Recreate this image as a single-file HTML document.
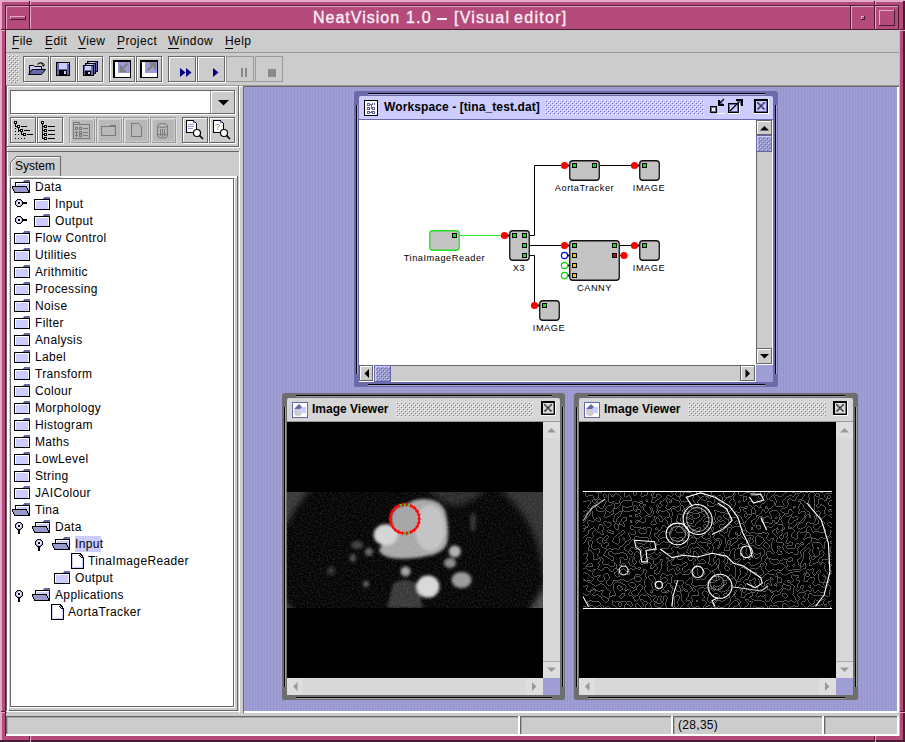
<!DOCTYPE html>
<html><head><meta charset="utf-8"><style>
html,body{margin:0;padding:0;}
body{width:905px;height:742px;overflow:hidden;position:relative;font-family:"Liberation Sans",sans-serif;}
body>div{position:absolute;}
.cr{filter:url(#crisp);}
</style></head><body>
<svg width="0" height="0" style="position:absolute"><filter id="crisp" x="-5%" y="-5%" width="110%" height="110%"><feComponentTransfer><feFuncA type="discrete" tableValues="0 0 0 1 1"/></feComponentTransfer></filter></svg>
<div style="left:0px;top:0px;width:905px;height:742px;background:#b44b7b;"></div>
<div style="left:0px;top:0px;width:905px;height:2px;background:#e2a9c9;"></div>
<div style="left:0px;top:0px;width:2px;height:742px;background:#e2a9c9;"></div>
<div style="left:903px;top:1px;width:2px;height:741px;background:#4b1b33;"></div>
<div style="left:0px;top:740px;width:905px;height:2px;background:#4b1b33;"></div>
<div style="left:5px;top:5px;width:894px;height:1px;background:#4b1b33;"></div>
<div style="left:5px;top:5px;width:1px;height:731px;background:#4b1b33;"></div>
<div style="left:899px;top:30px;width:1px;height:706px;background:#e2a9c9;"></div>
<div style="left:6px;top:735px;width:894px;height:1px;background:#e2a9c9;"></div>
<div style="left:6px;top:6px;width:893px;height:24px;background:#b44b7b;"></div>
<div style="left:6px;top:6px;width:24px;height:1px;background:#e2a9c9;"></div>
<div style="left:6px;top:6px;width:1px;height:24px;background:#e2a9c9;"></div>
<div style="left:6px;top:29px;width:24px;height:1px;background:#4b1b33;"></div>
<div style="left:29px;top:6px;width:1px;height:24px;background:#4b1b33;"></div>
<div style="left:30px;top:6px;width:821px;height:1px;background:#e2a9c9;"></div>
<div style="left:30px;top:6px;width:1px;height:24px;background:#e2a9c9;"></div>
<div style="left:30px;top:29px;width:821px;height:1px;background:#4b1b33;"></div>
<div style="left:850px;top:6px;width:1px;height:24px;background:#4b1b33;"></div>
<div style="left:851px;top:6px;width:24px;height:1px;background:#e2a9c9;"></div>
<div style="left:851px;top:6px;width:1px;height:24px;background:#e2a9c9;"></div>
<div style="left:851px;top:29px;width:24px;height:1px;background:#4b1b33;"></div>
<div style="left:874px;top:6px;width:1px;height:24px;background:#4b1b33;"></div>
<div style="left:875px;top:6px;width:24px;height:1px;background:#e2a9c9;"></div>
<div style="left:875px;top:6px;width:1px;height:24px;background:#e2a9c9;"></div>
<div style="left:875px;top:29px;width:24px;height:1px;background:#4b1b33;"></div>
<div style="left:898px;top:6px;width:1px;height:24px;background:#4b1b33;"></div>
<div style="left:10px;top:16px;width:16px;height:1px;background:#e2a9c9;"></div>
<div style="left:10px;top:16px;width:1px;height:4px;background:#e2a9c9;"></div>
<div style="left:10px;top:19px;width:16px;height:1px;background:#4b1b33;"></div>
<div style="left:25px;top:16px;width:1px;height:4px;background:#4b1b33;"></div>
<div style="left:861px;top:16px;width:4px;height:1px;background:#e2a9c9;"></div>
<div style="left:861px;top:16px;width:1px;height:4px;background:#e2a9c9;"></div>
<div style="left:861px;top:19px;width:4px;height:1px;background:#4b1b33;"></div>
<div style="left:864px;top:16px;width:1px;height:4px;background:#4b1b33;"></div>
<div style="left:879px;top:10px;width:16px;height:1px;background:#e2a9c9;"></div>
<div style="left:879px;top:10px;width:1px;height:16px;background:#e2a9c9;"></div>
<div style="left:879px;top:25px;width:16px;height:1px;background:#4b1b33;"></div>
<div style="left:894px;top:10px;width:1px;height:16px;background:#4b1b33;"></div>
<div style="left:29px;top:1px;width:1px;height:4px;background:#4b1b33;"></div>
<div style="left:30px;top:1px;width:1px;height:4px;background:#e2a9c9;"></div>
<div style="left:1px;top:29px;width:4px;height:1px;background:#4b1b33;"></div>
<div style="left:1px;top:30px;width:4px;height:1px;background:#e2a9c9;"></div>
<div style="left:874px;top:1px;width:1px;height:4px;background:#4b1b33;"></div>
<div style="left:875px;top:1px;width:1px;height:4px;background:#e2a9c9;"></div>
<div style="left:900px;top:29px;width:5px;height:1px;background:#4b1b33;"></div>
<div style="left:900px;top:30px;width:5px;height:1px;background:#e2a9c9;"></div>
<div style="left:1px;top:711px;width:4px;height:1px;background:#4b1b33;"></div>
<div style="left:1px;top:712px;width:4px;height:1px;background:#e2a9c9;"></div>
<div style="left:900px;top:711px;width:5px;height:1px;background:#4b1b33;"></div>
<div style="left:900px;top:712px;width:5px;height:1px;background:#e2a9c9;"></div>
<div style="left:29px;top:736px;width:1px;height:6px;background:#4b1b33;"></div>
<div style="left:30px;top:736px;width:1px;height:6px;background:#e2a9c9;"></div>
<div style="left:874px;top:736px;width:1px;height:6px;background:#4b1b33;"></div>
<div style="left:875px;top:736px;width:1px;height:6px;background:#e2a9c9;"></div>
<div class="" style="left:313px;top:9.96px;font-size:16px;line-height:16px;font-weight:normal;color:#faf0f5;white-space:pre;letter-spacing:1.0px;-webkit-text-stroke:0.35px #faf0f5">NeatVision</div>
<div class="" style="left:406px;top:9.96px;font-size:16px;line-height:16px;font-weight:normal;color:#faf0f5;white-space:pre;letter-spacing:1.2px;-webkit-text-stroke:0.35px #faf0f5">1.0</div>
<div class="" style="left:454px;top:9.96px;font-size:16px;line-height:16px;font-weight:normal;color:#faf0f5;white-space:pre;letter-spacing:1.2px;-webkit-text-stroke:0.35px #faf0f5">[Visual</div>
<div class="" style="left:514px;top:9.96px;font-size:16px;line-height:16px;font-weight:normal;color:#faf0f5;white-space:pre;letter-spacing:1.3px;-webkit-text-stroke:0.35px #faf0f5">editor]</div>
<div style="left:437px;top:18px;width:10px;height:2px;background:#faf0f5;"></div>
<div style="left:6px;top:30px;width:893px;height:705px;background:#cccccc;"></div>
<div style="left:6px;top:52px;width:893px;height:1px;background:#999999;"></div>
<div class="" style="left:12px;top:34.84px;font-size:12px;line-height:12px;font-weight:normal;color:#000;white-space:pre;letter-spacing:0.4px">File</div>
<div style="left:12px;top:48px;width:7px;height:1px;background:#000;"></div>
<div class="" style="left:45px;top:34.84px;font-size:12px;line-height:12px;font-weight:normal;color:#000;white-space:pre;letter-spacing:0.4px">Edit</div>
<div style="left:45px;top:48px;width:7px;height:1px;background:#000;"></div>
<div class="" style="left:78px;top:34.84px;font-size:12px;line-height:12px;font-weight:normal;color:#000;white-space:pre;letter-spacing:0.4px">View</div>
<div style="left:78px;top:48px;width:8px;height:1px;background:#000;"></div>
<div class="" style="left:117px;top:34.84px;font-size:12px;line-height:12px;font-weight:normal;color:#000;white-space:pre;letter-spacing:0.4px">Project</div>
<div style="left:117px;top:48px;width:7px;height:1px;background:#000;"></div>
<div class="" style="left:168px;top:34.84px;font-size:12px;line-height:12px;font-weight:normal;color:#000;white-space:pre;letter-spacing:0.4px">Window</div>
<div style="left:168px;top:48px;width:11px;height:1px;background:#000;"></div>
<div class="" style="left:225px;top:34.84px;font-size:12px;line-height:12px;font-weight:normal;color:#000;white-space:pre;letter-spacing:0.4px">Help</div>
<div style="left:225px;top:48px;width:8px;height:1px;background:#000;"></div>
<svg style="position:absolute;left:8px;top:55px" width="11" height="28" shape-rendering="crispEdges"><defs><pattern id="gp" width="4" height="4" patternUnits="userSpaceOnUse"><rect x="0" y="0" width="1" height="1" fill="#fff"/><rect x="2" y="2" width="1" height="1" fill="#fff"/><rect x="1" y="1" width="1" height="1" fill="#777"/><rect x="3" y="3" width="1" height="1" fill="#777"/></pattern></defs><rect width="11" height="28" fill="url(#gp)"/></svg>
<div style="left:23px;top:56px;width:26px;height:1px;background:#666666;"></div>
<div style="left:23px;top:56px;width:1px;height:26px;background:#666666;"></div>
<div style="left:23px;top:81px;width:26px;height:1px;background:#666666;"></div>
<div style="left:48px;top:56px;width:1px;height:26px;background:#666666;"></div>
<div style="left:24px;top:57px;width:26px;height:1px;background:#ffffff;"></div>
<div style="left:24px;top:57px;width:1px;height:26px;background:#ffffff;"></div>
<div style="left:24px;top:82px;width:26px;height:1px;background:#ffffff;"></div>
<div style="left:49px;top:57px;width:1px;height:26px;background:#ffffff;"></div>
<div style="left:23px;top:56px;width:26px;height:1px;background:#666666;"></div>
<div style="left:23px;top:56px;width:1px;height:26px;background:#666666;"></div>
<div style="left:24px;top:81px;width:25px;height:1px;background:#666666;"></div>
<div style="left:48px;top:57px;width:1px;height:25px;background:#666666;"></div>
<div style="left:50px;top:56px;width:26px;height:1px;background:#666666;"></div>
<div style="left:50px;top:56px;width:1px;height:26px;background:#666666;"></div>
<div style="left:50px;top:81px;width:26px;height:1px;background:#666666;"></div>
<div style="left:75px;top:56px;width:1px;height:26px;background:#666666;"></div>
<div style="left:51px;top:57px;width:26px;height:1px;background:#ffffff;"></div>
<div style="left:51px;top:57px;width:1px;height:26px;background:#ffffff;"></div>
<div style="left:51px;top:82px;width:26px;height:1px;background:#ffffff;"></div>
<div style="left:76px;top:57px;width:1px;height:26px;background:#ffffff;"></div>
<div style="left:50px;top:56px;width:26px;height:1px;background:#666666;"></div>
<div style="left:50px;top:56px;width:1px;height:26px;background:#666666;"></div>
<div style="left:51px;top:81px;width:25px;height:1px;background:#666666;"></div>
<div style="left:75px;top:57px;width:1px;height:25px;background:#666666;"></div>
<div style="left:77px;top:56px;width:26px;height:1px;background:#666666;"></div>
<div style="left:77px;top:56px;width:1px;height:26px;background:#666666;"></div>
<div style="left:77px;top:81px;width:26px;height:1px;background:#666666;"></div>
<div style="left:102px;top:56px;width:1px;height:26px;background:#666666;"></div>
<div style="left:78px;top:57px;width:26px;height:1px;background:#ffffff;"></div>
<div style="left:78px;top:57px;width:1px;height:26px;background:#ffffff;"></div>
<div style="left:78px;top:82px;width:26px;height:1px;background:#ffffff;"></div>
<div style="left:103px;top:57px;width:1px;height:26px;background:#ffffff;"></div>
<div style="left:77px;top:56px;width:26px;height:1px;background:#666666;"></div>
<div style="left:77px;top:56px;width:1px;height:26px;background:#666666;"></div>
<div style="left:78px;top:81px;width:25px;height:1px;background:#666666;"></div>
<div style="left:102px;top:57px;width:1px;height:25px;background:#666666;"></div>
<div style="left:109px;top:56px;width:26px;height:1px;background:#666666;"></div>
<div style="left:109px;top:56px;width:1px;height:26px;background:#666666;"></div>
<div style="left:109px;top:81px;width:26px;height:1px;background:#666666;"></div>
<div style="left:134px;top:56px;width:1px;height:26px;background:#666666;"></div>
<div style="left:110px;top:57px;width:26px;height:1px;background:#ffffff;"></div>
<div style="left:110px;top:57px;width:1px;height:26px;background:#ffffff;"></div>
<div style="left:110px;top:82px;width:26px;height:1px;background:#ffffff;"></div>
<div style="left:135px;top:57px;width:1px;height:26px;background:#ffffff;"></div>
<div style="left:109px;top:56px;width:26px;height:1px;background:#666666;"></div>
<div style="left:109px;top:56px;width:1px;height:26px;background:#666666;"></div>
<div style="left:110px;top:81px;width:25px;height:1px;background:#666666;"></div>
<div style="left:134px;top:57px;width:1px;height:25px;background:#666666;"></div>
<div style="left:136px;top:56px;width:26px;height:1px;background:#666666;"></div>
<div style="left:136px;top:56px;width:1px;height:26px;background:#666666;"></div>
<div style="left:136px;top:81px;width:26px;height:1px;background:#666666;"></div>
<div style="left:161px;top:56px;width:1px;height:26px;background:#666666;"></div>
<div style="left:137px;top:57px;width:26px;height:1px;background:#ffffff;"></div>
<div style="left:137px;top:57px;width:1px;height:26px;background:#ffffff;"></div>
<div style="left:137px;top:82px;width:26px;height:1px;background:#ffffff;"></div>
<div style="left:162px;top:57px;width:1px;height:26px;background:#ffffff;"></div>
<div style="left:136px;top:56px;width:26px;height:1px;background:#666666;"></div>
<div style="left:136px;top:56px;width:1px;height:26px;background:#666666;"></div>
<div style="left:137px;top:81px;width:25px;height:1px;background:#666666;"></div>
<div style="left:161px;top:57px;width:1px;height:25px;background:#666666;"></div>
<div style="left:168px;top:56px;width:28px;height:1px;background:#666666;"></div>
<div style="left:168px;top:56px;width:1px;height:26px;background:#666666;"></div>
<div style="left:168px;top:81px;width:28px;height:1px;background:#666666;"></div>
<div style="left:195px;top:56px;width:1px;height:26px;background:#666666;"></div>
<div style="left:169px;top:57px;width:28px;height:1px;background:#ffffff;"></div>
<div style="left:169px;top:57px;width:1px;height:26px;background:#ffffff;"></div>
<div style="left:169px;top:82px;width:28px;height:1px;background:#ffffff;"></div>
<div style="left:196px;top:57px;width:1px;height:26px;background:#ffffff;"></div>
<div style="left:168px;top:56px;width:28px;height:1px;background:#666666;"></div>
<div style="left:168px;top:56px;width:1px;height:26px;background:#666666;"></div>
<div style="left:169px;top:81px;width:27px;height:1px;background:#666666;"></div>
<div style="left:195px;top:57px;width:1px;height:25px;background:#666666;"></div>
<div style="left:197px;top:56px;width:28px;height:1px;background:#666666;"></div>
<div style="left:197px;top:56px;width:1px;height:26px;background:#666666;"></div>
<div style="left:197px;top:81px;width:28px;height:1px;background:#666666;"></div>
<div style="left:224px;top:56px;width:1px;height:26px;background:#666666;"></div>
<div style="left:198px;top:57px;width:28px;height:1px;background:#ffffff;"></div>
<div style="left:198px;top:57px;width:1px;height:26px;background:#ffffff;"></div>
<div style="left:198px;top:82px;width:28px;height:1px;background:#ffffff;"></div>
<div style="left:225px;top:57px;width:1px;height:26px;background:#ffffff;"></div>
<div style="left:197px;top:56px;width:28px;height:1px;background:#666666;"></div>
<div style="left:197px;top:56px;width:1px;height:26px;background:#666666;"></div>
<div style="left:198px;top:81px;width:27px;height:1px;background:#666666;"></div>
<div style="left:224px;top:57px;width:1px;height:25px;background:#666666;"></div>
<div style="left:226px;top:56px;width:28px;height:1px;background:#999999;"></div>
<div style="left:226px;top:56px;width:1px;height:26px;background:#999999;"></div>
<div style="left:226px;top:81px;width:28px;height:1px;background:#999999;"></div>
<div style="left:253px;top:56px;width:1px;height:26px;background:#999999;"></div>
<div style="left:255px;top:56px;width:28px;height:1px;background:#999999;"></div>
<div style="left:255px;top:56px;width:1px;height:26px;background:#999999;"></div>
<div style="left:255px;top:81px;width:28px;height:1px;background:#999999;"></div>
<div style="left:282px;top:56px;width:1px;height:26px;background:#999999;"></div>
<div style="left:6px;top:85px;width:893px;height:1px;background:#999999;"></div>
<div style="left:6px;top:86px;width:893px;height:1px;background:#ffffff;"></div>
<div style="left:6px;top:86px;width:1px;height:627px;background:#666666;"></div>
<div style="left:7px;top:87px;width:1px;height:625px;background:#ffffff;"></div>
<div style="left:10px;top:90px;width:225px;height:1px;background:#666666;"></div>
<div style="left:10px;top:90px;width:1px;height:24px;background:#666666;"></div>
<div style="left:10px;top:113px;width:225px;height:1px;background:#666666;"></div>
<div style="left:234px;top:90px;width:1px;height:24px;background:#666666;"></div>
<div style="left:11px;top:114px;width:225px;height:1px;background:#ffffff;"></div>
<div style="left:235px;top:91px;width:1px;height:24px;background:#ffffff;"></div>
<div style="left:11px;top:91px;width:199px;height:22px;background:#ffffff;"></div>
<div style="left:210px;top:91px;width:1px;height:22px;background:#999999;"></div>
<div style="left:211px;top:91px;width:23px;height:1px;background:#ffffff;"></div>
<div style="left:211px;top:91px;width:1px;height:22px;background:#ffffff;"></div>
<svg style="position:absolute;left:218px;top:100px" width="11" height="6"><path d="M0 0H11L5.5 5.5Z" fill="#000"/></svg>
<div style="left:11px;top:118px;width:26px;height:1px;background:#ffffff;"></div>
<div style="left:11px;top:118px;width:1px;height:26px;background:#ffffff;"></div>
<div style="left:11px;top:143px;width:26px;height:1px;background:#ffffff;"></div>
<div style="left:36px;top:118px;width:1px;height:26px;background:#ffffff;"></div>
<div style="left:10px;top:117px;width:26px;height:1px;background:#666666;"></div>
<div style="left:10px;top:117px;width:1px;height:26px;background:#666666;"></div>
<div style="left:10px;top:142px;width:26px;height:1px;background:#666666;"></div>
<div style="left:35px;top:117px;width:1px;height:26px;background:#666666;"></div>
<div style="left:38px;top:118px;width:26px;height:1px;background:#ffffff;"></div>
<div style="left:38px;top:118px;width:1px;height:26px;background:#ffffff;"></div>
<div style="left:38px;top:143px;width:26px;height:1px;background:#ffffff;"></div>
<div style="left:63px;top:118px;width:1px;height:26px;background:#ffffff;"></div>
<div style="left:37px;top:117px;width:26px;height:1px;background:#666666;"></div>
<div style="left:37px;top:117px;width:1px;height:26px;background:#666666;"></div>
<div style="left:37px;top:142px;width:26px;height:1px;background:#666666;"></div>
<div style="left:62px;top:117px;width:1px;height:26px;background:#666666;"></div>
<div style="left:183px;top:118px;width:26px;height:1px;background:#ffffff;"></div>
<div style="left:183px;top:118px;width:1px;height:26px;background:#ffffff;"></div>
<div style="left:183px;top:143px;width:26px;height:1px;background:#ffffff;"></div>
<div style="left:208px;top:118px;width:1px;height:26px;background:#ffffff;"></div>
<div style="left:182px;top:117px;width:26px;height:1px;background:#666666;"></div>
<div style="left:182px;top:117px;width:1px;height:26px;background:#666666;"></div>
<div style="left:182px;top:142px;width:26px;height:1px;background:#666666;"></div>
<div style="left:207px;top:117px;width:1px;height:26px;background:#666666;"></div>
<div style="left:210px;top:118px;width:26px;height:1px;background:#ffffff;"></div>
<div style="left:210px;top:118px;width:1px;height:26px;background:#ffffff;"></div>
<div style="left:210px;top:143px;width:26px;height:1px;background:#ffffff;"></div>
<div style="left:235px;top:118px;width:1px;height:26px;background:#ffffff;"></div>
<div style="left:209px;top:117px;width:26px;height:1px;background:#666666;"></div>
<div style="left:209px;top:117px;width:1px;height:26px;background:#666666;"></div>
<div style="left:209px;top:142px;width:26px;height:1px;background:#666666;"></div>
<div style="left:234px;top:117px;width:1px;height:26px;background:#666666;"></div>
<div style="left:69px;top:117px;width:26px;height:1px;background:#999999;"></div>
<div style="left:69px;top:117px;width:1px;height:26px;background:#999999;"></div>
<div style="left:69px;top:142px;width:26px;height:1px;background:#999999;"></div>
<div style="left:94px;top:117px;width:1px;height:26px;background:#999999;"></div>
<div style="left:70px;top:118px;width:26px;height:1px;background:#e0e0e0;"></div>
<div style="left:70px;top:118px;width:1px;height:26px;background:#e0e0e0;"></div>
<div style="left:70px;top:143px;width:26px;height:1px;background:#e0e0e0;"></div>
<div style="left:95px;top:118px;width:1px;height:26px;background:#e0e0e0;"></div>
<div style="left:72px;top:120px;width:21px;height:21px;background:#b8b8b8;"></div>
<div style="left:96px;top:117px;width:26px;height:1px;background:#999999;"></div>
<div style="left:96px;top:117px;width:1px;height:26px;background:#999999;"></div>
<div style="left:96px;top:142px;width:26px;height:1px;background:#999999;"></div>
<div style="left:121px;top:117px;width:1px;height:26px;background:#999999;"></div>
<div style="left:97px;top:118px;width:26px;height:1px;background:#e0e0e0;"></div>
<div style="left:97px;top:118px;width:1px;height:26px;background:#e0e0e0;"></div>
<div style="left:97px;top:143px;width:26px;height:1px;background:#e0e0e0;"></div>
<div style="left:122px;top:118px;width:1px;height:26px;background:#e0e0e0;"></div>
<div style="left:99px;top:120px;width:21px;height:21px;background:#b8b8b8;"></div>
<div style="left:123px;top:117px;width:26px;height:1px;background:#999999;"></div>
<div style="left:123px;top:117px;width:1px;height:26px;background:#999999;"></div>
<div style="left:123px;top:142px;width:26px;height:1px;background:#999999;"></div>
<div style="left:148px;top:117px;width:1px;height:26px;background:#999999;"></div>
<div style="left:124px;top:118px;width:26px;height:1px;background:#e0e0e0;"></div>
<div style="left:124px;top:118px;width:1px;height:26px;background:#e0e0e0;"></div>
<div style="left:124px;top:143px;width:26px;height:1px;background:#e0e0e0;"></div>
<div style="left:149px;top:118px;width:1px;height:26px;background:#e0e0e0;"></div>
<div style="left:126px;top:120px;width:21px;height:21px;background:#b8b8b8;"></div>
<div style="left:150px;top:117px;width:26px;height:1px;background:#999999;"></div>
<div style="left:150px;top:117px;width:1px;height:26px;background:#999999;"></div>
<div style="left:150px;top:142px;width:26px;height:1px;background:#999999;"></div>
<div style="left:175px;top:117px;width:1px;height:26px;background:#999999;"></div>
<div style="left:151px;top:118px;width:26px;height:1px;background:#e0e0e0;"></div>
<div style="left:151px;top:118px;width:1px;height:26px;background:#e0e0e0;"></div>
<div style="left:151px;top:143px;width:26px;height:1px;background:#e0e0e0;"></div>
<div style="left:176px;top:118px;width:1px;height:26px;background:#e0e0e0;"></div>
<div style="left:153px;top:120px;width:21px;height:21px;background:#b8b8b8;"></div>
<div style="left:6px;top:146px;width:233px;height:1px;background:#666666;"></div>
<div style="left:7px;top:147px;width:233px;height:1px;background:#ffffff;"></div>
<div style="left:238px;top:86px;width:1px;height:61px;background:#666666;"></div>
<div style="left:239px;top:87px;width:1px;height:61px;background:#ffffff;"></div>
<div style="left:6px;top:151px;width:234px;height:1px;background:#666666;"></div>
<div style="left:239px;top:151px;width:1px;height:562px;background:#ffffff;"></div>
<div style="left:6px;top:711px;width:234px;height:1px;background:#ffffff;"></div>
<svg style="position:absolute;left:9px;top:155px" width="53" height="23"><path d="M1.5 22V7.5L7.5 1.5H51.5V22" fill="#cccccc" stroke="#666" stroke-width="1"/><path d="M2.5 22V8L8 2.5H50.5" fill="none" stroke="#fff" stroke-width="1"/></svg>
<div class="" style="left:15px;top:159.84px;font-size:12px;line-height:12px;font-weight:normal;color:#000;white-space:pre;">System</div>
<div style="left:9px;top:176px;width:228px;height:1px;background:#ffffff;"></div>
<div style="left:61px;top:177px;width:176px;height:1px;background:#ffffff;"></div>
<div style="left:237px;top:176px;width:1px;height:535px;background:#666666;"></div>
<div style="left:9px;top:710px;width:229px;height:1px;background:#666666;"></div>
<div style="left:8px;top:176px;width:1px;height:534px;background:#ffffff;"></div>
<div style="left:10px;top:178px;width:224px;height:1px;background:#666666;"></div>
<div style="left:10px;top:178px;width:1px;height:529px;background:#666666;"></div>
<div style="left:10px;top:706px;width:224px;height:1px;background:#666666;"></div>
<div style="left:233px;top:178px;width:1px;height:529px;background:#666666;"></div>
<div style="left:234px;top:178px;width:1px;height:530px;background:#ffffff;"></div>
<div style="left:10px;top:707px;width:225px;height:1px;background:#ffffff;"></div>
<div style="left:11px;top:179px;width:222px;height:527px;background:#ffffff;"></div>
<svg style="position:absolute;left:12px;top:180px" width="18" height="13" shape-rendering="crispEdges"><rect x="12" y="0" width="6" height="1" fill="#6666aa"/><rect x="11" y="1" width="7" height="1" fill="#6666aa"/><rect x="3" y="2" width="15" height="1" fill="#000000"/><rect x="3" y="3" width="1" height="1" fill="#000000"/><rect x="4" y="3" width="13" height="1" fill="#ffffff"/><rect x="17" y="3" width="1" height="1" fill="#000000"/><rect x="3" y="4" width="1" height="1" fill="#000000"/><rect x="4" y="4" width="1" height="1" fill="#ffffff"/><rect x="5" y="4" width="12" height="1" fill="#ccccff"/><rect x="17" y="4" width="1" height="1" fill="#000000"/><rect x="3" y="5" width="1" height="1" fill="#000000"/><rect x="4" y="5" width="1" height="1" fill="#ffffff"/><rect x="5" y="5" width="12" height="1" fill="#ccccff"/><rect x="17" y="5" width="1" height="1" fill="#000000"/><rect x="0" y="6" width="15" height="1" fill="#000000"/><rect x="15" y="6" width="2" height="1" fill="#ccccff"/><rect x="17" y="6" width="1" height="1" fill="#000000"/><rect x="0" y="7" width="1" height="1" fill="#000000"/><rect x="1" y="7" width="13" height="1" fill="#9999cc"/><rect x="14" y="7" width="1" height="1" fill="#000000"/><rect x="15" y="7" width="2" height="1" fill="#ccccff"/><rect x="17" y="7" width="1" height="1" fill="#000000"/><rect x="0" y="8" width="1" height="1" fill="#000000"/><rect x="1" y="8" width="14" height="1" fill="#9999cc"/><rect x="15" y="8" width="1" height="1" fill="#000000"/><rect x="16" y="8" width="1" height="1" fill="#ccccff"/><rect x="17" y="8" width="1" height="1" fill="#000000"/><rect x="1" y="9" width="1" height="1" fill="#000000"/><rect x="2" y="9" width="13" height="1" fill="#9999cc"/><rect x="15" y="9" width="1" height="1" fill="#000000"/><rect x="16" y="9" width="1" height="1" fill="#ccccff"/><rect x="17" y="9" width="1" height="1" fill="#000000"/><rect x="1" y="10" width="1" height="1" fill="#000000"/><rect x="2" y="10" width="14" height="1" fill="#9999cc"/><rect x="16" y="10" width="2" height="1" fill="#000000"/><rect x="2" y="11" width="1" height="1" fill="#000000"/><rect x="3" y="11" width="13" height="1" fill="#9999cc"/><rect x="16" y="11" width="2" height="1" fill="#000000"/><rect x="2" y="12" width="16" height="1" fill="#000000"/></svg>
<div class="" style="left:35px;top:180.84px;font-size:12px;line-height:12px;font-weight:normal;color:#000;white-space:pre;letter-spacing:0.35px">Data</div>
<svg style="position:absolute;left:34px;top:197px" width="16" height="13" shape-rendering="crispEdges"><rect x="10" y="0" width="6" height="1" fill="#6666aa"/><rect x="9" y="1" width="7" height="1" fill="#6666aa"/><rect x="0" y="2" width="16" height="1" fill="#000000"/><rect x="0" y="3" width="1" height="1" fill="#000000"/><rect x="1" y="3" width="14" height="1" fill="#ffffff"/><rect x="15" y="3" width="1" height="1" fill="#000000"/><rect x="0" y="4" width="1" height="1" fill="#000000"/><rect x="1" y="4" width="1" height="1" fill="#ffffff"/><rect x="2" y="4" width="12" height="1" fill="#ccccff"/><rect x="14" y="4" width="1" height="1" fill="#ffffff"/><rect x="15" y="4" width="1" height="1" fill="#000000"/><rect x="0" y="5" width="1" height="1" fill="#000000"/><rect x="1" y="5" width="1" height="1" fill="#ffffff"/><rect x="2" y="5" width="12" height="1" fill="#ccccff"/><rect x="14" y="5" width="1" height="1" fill="#ffffff"/><rect x="15" y="5" width="1" height="1" fill="#000000"/><rect x="0" y="6" width="1" height="1" fill="#000000"/><rect x="1" y="6" width="1" height="1" fill="#ffffff"/><rect x="2" y="6" width="12" height="1" fill="#ccccff"/><rect x="14" y="6" width="1" height="1" fill="#ffffff"/><rect x="15" y="6" width="1" height="1" fill="#000000"/><rect x="0" y="7" width="1" height="1" fill="#000000"/><rect x="1" y="7" width="1" height="1" fill="#ffffff"/><rect x="2" y="7" width="12" height="1" fill="#ccccff"/><rect x="14" y="7" width="1" height="1" fill="#ffffff"/><rect x="15" y="7" width="1" height="1" fill="#000000"/><rect x="0" y="8" width="1" height="1" fill="#000000"/><rect x="1" y="8" width="1" height="1" fill="#ffffff"/><rect x="2" y="8" width="12" height="1" fill="#ccccff"/><rect x="14" y="8" width="1" height="1" fill="#ffffff"/><rect x="15" y="8" width="1" height="1" fill="#000000"/><rect x="0" y="9" width="1" height="1" fill="#000000"/><rect x="1" y="9" width="1" height="1" fill="#ffffff"/><rect x="2" y="9" width="12" height="1" fill="#ccccff"/><rect x="14" y="9" width="1" height="1" fill="#ffffff"/><rect x="15" y="9" width="1" height="1" fill="#000000"/><rect x="0" y="10" width="1" height="1" fill="#000000"/><rect x="1" y="10" width="1" height="1" fill="#ffffff"/><rect x="2" y="10" width="12" height="1" fill="#ccccff"/><rect x="14" y="10" width="1" height="1" fill="#ffffff"/><rect x="15" y="10" width="1" height="1" fill="#000000"/><rect x="0" y="11" width="1" height="1" fill="#000000"/><rect x="1" y="11" width="1" height="1" fill="#ffffff"/><rect x="2" y="11" width="12" height="1" fill="#ccccff"/><rect x="14" y="11" width="1" height="1" fill="#ffffff"/><rect x="15" y="11" width="1" height="1" fill="#000000"/><rect x="0" y="12" width="16" height="1" fill="#000000"/></svg>
<svg style="position:absolute;left:15px;top:199px" width="12" height="8" shape-rendering="crispEdges"><rect x="2" y="0" width="4" height="1" fill="#000000"/><rect x="1" y="1" width="1" height="1" fill="#000000"/><rect x="2" y="1" width="1" height="1" fill="#9999cc"/><rect x="3" y="1" width="2" height="1" fill="#ccccff"/><rect x="5" y="1" width="1" height="1" fill="#9999cc"/><rect x="6" y="1" width="1" height="1" fill="#000000"/><rect x="0" y="2" width="1" height="1" fill="#000000"/><rect x="1" y="2" width="1" height="1" fill="#9999cc"/><rect x="2" y="2" width="1" height="1" fill="#ccccff"/><rect x="3" y="2" width="2" height="1" fill="#ffffff"/><rect x="5" y="2" width="1" height="1" fill="#ccccff"/><rect x="6" y="2" width="1" height="1" fill="#9999cc"/><rect x="7" y="2" width="1" height="1" fill="#000000"/><rect x="0" y="3" width="1" height="1" fill="#000000"/><rect x="1" y="3" width="1" height="1" fill="#ccccff"/><rect x="2" y="3" width="1" height="1" fill="#ffffff"/><rect x="3" y="3" width="2" height="1" fill="#000000"/><rect x="5" y="3" width="1" height="1" fill="#ffffff"/><rect x="6" y="3" width="1" height="1" fill="#ccccff"/><rect x="7" y="3" width="5" height="1" fill="#000000"/><rect x="0" y="4" width="1" height="1" fill="#000000"/><rect x="1" y="4" width="1" height="1" fill="#ccccff"/><rect x="2" y="4" width="1" height="1" fill="#ffffff"/><rect x="3" y="4" width="2" height="1" fill="#000000"/><rect x="5" y="4" width="1" height="1" fill="#ffffff"/><rect x="6" y="4" width="1" height="1" fill="#ccccff"/><rect x="7" y="4" width="5" height="1" fill="#000000"/><rect x="0" y="5" width="1" height="1" fill="#000000"/><rect x="1" y="5" width="1" height="1" fill="#9999cc"/><rect x="2" y="5" width="1" height="1" fill="#ccccff"/><rect x="3" y="5" width="2" height="1" fill="#ffffff"/><rect x="5" y="5" width="1" height="1" fill="#ccccff"/><rect x="6" y="5" width="1" height="1" fill="#9999cc"/><rect x="7" y="5" width="1" height="1" fill="#000000"/><rect x="1" y="6" width="1" height="1" fill="#000000"/><rect x="2" y="6" width="1" height="1" fill="#9999cc"/><rect x="3" y="6" width="2" height="1" fill="#ccccff"/><rect x="5" y="6" width="1" height="1" fill="#9999cc"/><rect x="6" y="6" width="1" height="1" fill="#000000"/><rect x="2" y="7" width="4" height="1" fill="#000000"/></svg>
<div class="" style="left:55px;top:197.84px;font-size:12px;line-height:12px;font-weight:normal;color:#000;white-space:pre;letter-spacing:0.35px">Input</div>
<svg style="position:absolute;left:34px;top:214px" width="16" height="13" shape-rendering="crispEdges"><rect x="10" y="0" width="6" height="1" fill="#6666aa"/><rect x="9" y="1" width="7" height="1" fill="#6666aa"/><rect x="0" y="2" width="16" height="1" fill="#000000"/><rect x="0" y="3" width="1" height="1" fill="#000000"/><rect x="1" y="3" width="14" height="1" fill="#ffffff"/><rect x="15" y="3" width="1" height="1" fill="#000000"/><rect x="0" y="4" width="1" height="1" fill="#000000"/><rect x="1" y="4" width="1" height="1" fill="#ffffff"/><rect x="2" y="4" width="12" height="1" fill="#ccccff"/><rect x="14" y="4" width="1" height="1" fill="#ffffff"/><rect x="15" y="4" width="1" height="1" fill="#000000"/><rect x="0" y="5" width="1" height="1" fill="#000000"/><rect x="1" y="5" width="1" height="1" fill="#ffffff"/><rect x="2" y="5" width="12" height="1" fill="#ccccff"/><rect x="14" y="5" width="1" height="1" fill="#ffffff"/><rect x="15" y="5" width="1" height="1" fill="#000000"/><rect x="0" y="6" width="1" height="1" fill="#000000"/><rect x="1" y="6" width="1" height="1" fill="#ffffff"/><rect x="2" y="6" width="12" height="1" fill="#ccccff"/><rect x="14" y="6" width="1" height="1" fill="#ffffff"/><rect x="15" y="6" width="1" height="1" fill="#000000"/><rect x="0" y="7" width="1" height="1" fill="#000000"/><rect x="1" y="7" width="1" height="1" fill="#ffffff"/><rect x="2" y="7" width="12" height="1" fill="#ccccff"/><rect x="14" y="7" width="1" height="1" fill="#ffffff"/><rect x="15" y="7" width="1" height="1" fill="#000000"/><rect x="0" y="8" width="1" height="1" fill="#000000"/><rect x="1" y="8" width="1" height="1" fill="#ffffff"/><rect x="2" y="8" width="12" height="1" fill="#ccccff"/><rect x="14" y="8" width="1" height="1" fill="#ffffff"/><rect x="15" y="8" width="1" height="1" fill="#000000"/><rect x="0" y="9" width="1" height="1" fill="#000000"/><rect x="1" y="9" width="1" height="1" fill="#ffffff"/><rect x="2" y="9" width="12" height="1" fill="#ccccff"/><rect x="14" y="9" width="1" height="1" fill="#ffffff"/><rect x="15" y="9" width="1" height="1" fill="#000000"/><rect x="0" y="10" width="1" height="1" fill="#000000"/><rect x="1" y="10" width="1" height="1" fill="#ffffff"/><rect x="2" y="10" width="12" height="1" fill="#ccccff"/><rect x="14" y="10" width="1" height="1" fill="#ffffff"/><rect x="15" y="10" width="1" height="1" fill="#000000"/><rect x="0" y="11" width="1" height="1" fill="#000000"/><rect x="1" y="11" width="1" height="1" fill="#ffffff"/><rect x="2" y="11" width="12" height="1" fill="#ccccff"/><rect x="14" y="11" width="1" height="1" fill="#ffffff"/><rect x="15" y="11" width="1" height="1" fill="#000000"/><rect x="0" y="12" width="16" height="1" fill="#000000"/></svg>
<svg style="position:absolute;left:15px;top:216px" width="12" height="8" shape-rendering="crispEdges"><rect x="2" y="0" width="4" height="1" fill="#000000"/><rect x="1" y="1" width="1" height="1" fill="#000000"/><rect x="2" y="1" width="1" height="1" fill="#9999cc"/><rect x="3" y="1" width="2" height="1" fill="#ccccff"/><rect x="5" y="1" width="1" height="1" fill="#9999cc"/><rect x="6" y="1" width="1" height="1" fill="#000000"/><rect x="0" y="2" width="1" height="1" fill="#000000"/><rect x="1" y="2" width="1" height="1" fill="#9999cc"/><rect x="2" y="2" width="1" height="1" fill="#ccccff"/><rect x="3" y="2" width="2" height="1" fill="#ffffff"/><rect x="5" y="2" width="1" height="1" fill="#ccccff"/><rect x="6" y="2" width="1" height="1" fill="#9999cc"/><rect x="7" y="2" width="1" height="1" fill="#000000"/><rect x="0" y="3" width="1" height="1" fill="#000000"/><rect x="1" y="3" width="1" height="1" fill="#ccccff"/><rect x="2" y="3" width="1" height="1" fill="#ffffff"/><rect x="3" y="3" width="2" height="1" fill="#000000"/><rect x="5" y="3" width="1" height="1" fill="#ffffff"/><rect x="6" y="3" width="1" height="1" fill="#ccccff"/><rect x="7" y="3" width="5" height="1" fill="#000000"/><rect x="0" y="4" width="1" height="1" fill="#000000"/><rect x="1" y="4" width="1" height="1" fill="#ccccff"/><rect x="2" y="4" width="1" height="1" fill="#ffffff"/><rect x="3" y="4" width="2" height="1" fill="#000000"/><rect x="5" y="4" width="1" height="1" fill="#ffffff"/><rect x="6" y="4" width="1" height="1" fill="#ccccff"/><rect x="7" y="4" width="5" height="1" fill="#000000"/><rect x="0" y="5" width="1" height="1" fill="#000000"/><rect x="1" y="5" width="1" height="1" fill="#9999cc"/><rect x="2" y="5" width="1" height="1" fill="#ccccff"/><rect x="3" y="5" width="2" height="1" fill="#ffffff"/><rect x="5" y="5" width="1" height="1" fill="#ccccff"/><rect x="6" y="5" width="1" height="1" fill="#9999cc"/><rect x="7" y="5" width="1" height="1" fill="#000000"/><rect x="1" y="6" width="1" height="1" fill="#000000"/><rect x="2" y="6" width="1" height="1" fill="#9999cc"/><rect x="3" y="6" width="2" height="1" fill="#ccccff"/><rect x="5" y="6" width="1" height="1" fill="#9999cc"/><rect x="6" y="6" width="1" height="1" fill="#000000"/><rect x="2" y="7" width="4" height="1" fill="#000000"/></svg>
<div class="" style="left:55px;top:214.84px;font-size:12px;line-height:12px;font-weight:normal;color:#000;white-space:pre;letter-spacing:0.35px">Output</div>
<svg style="position:absolute;left:14px;top:231px" width="16" height="13" shape-rendering="crispEdges"><rect x="10" y="0" width="6" height="1" fill="#6666aa"/><rect x="9" y="1" width="7" height="1" fill="#6666aa"/><rect x="0" y="2" width="16" height="1" fill="#000000"/><rect x="0" y="3" width="1" height="1" fill="#000000"/><rect x="1" y="3" width="14" height="1" fill="#ffffff"/><rect x="15" y="3" width="1" height="1" fill="#000000"/><rect x="0" y="4" width="1" height="1" fill="#000000"/><rect x="1" y="4" width="1" height="1" fill="#ffffff"/><rect x="2" y="4" width="12" height="1" fill="#ccccff"/><rect x="14" y="4" width="1" height="1" fill="#ffffff"/><rect x="15" y="4" width="1" height="1" fill="#000000"/><rect x="0" y="5" width="1" height="1" fill="#000000"/><rect x="1" y="5" width="1" height="1" fill="#ffffff"/><rect x="2" y="5" width="12" height="1" fill="#ccccff"/><rect x="14" y="5" width="1" height="1" fill="#ffffff"/><rect x="15" y="5" width="1" height="1" fill="#000000"/><rect x="0" y="6" width="1" height="1" fill="#000000"/><rect x="1" y="6" width="1" height="1" fill="#ffffff"/><rect x="2" y="6" width="12" height="1" fill="#ccccff"/><rect x="14" y="6" width="1" height="1" fill="#ffffff"/><rect x="15" y="6" width="1" height="1" fill="#000000"/><rect x="0" y="7" width="1" height="1" fill="#000000"/><rect x="1" y="7" width="1" height="1" fill="#ffffff"/><rect x="2" y="7" width="12" height="1" fill="#ccccff"/><rect x="14" y="7" width="1" height="1" fill="#ffffff"/><rect x="15" y="7" width="1" height="1" fill="#000000"/><rect x="0" y="8" width="1" height="1" fill="#000000"/><rect x="1" y="8" width="1" height="1" fill="#ffffff"/><rect x="2" y="8" width="12" height="1" fill="#ccccff"/><rect x="14" y="8" width="1" height="1" fill="#ffffff"/><rect x="15" y="8" width="1" height="1" fill="#000000"/><rect x="0" y="9" width="1" height="1" fill="#000000"/><rect x="1" y="9" width="1" height="1" fill="#ffffff"/><rect x="2" y="9" width="12" height="1" fill="#ccccff"/><rect x="14" y="9" width="1" height="1" fill="#ffffff"/><rect x="15" y="9" width="1" height="1" fill="#000000"/><rect x="0" y="10" width="1" height="1" fill="#000000"/><rect x="1" y="10" width="1" height="1" fill="#ffffff"/><rect x="2" y="10" width="12" height="1" fill="#ccccff"/><rect x="14" y="10" width="1" height="1" fill="#ffffff"/><rect x="15" y="10" width="1" height="1" fill="#000000"/><rect x="0" y="11" width="1" height="1" fill="#000000"/><rect x="1" y="11" width="1" height="1" fill="#ffffff"/><rect x="2" y="11" width="12" height="1" fill="#ccccff"/><rect x="14" y="11" width="1" height="1" fill="#ffffff"/><rect x="15" y="11" width="1" height="1" fill="#000000"/><rect x="0" y="12" width="16" height="1" fill="#000000"/></svg>
<div class="" style="left:35px;top:231.84px;font-size:12px;line-height:12px;font-weight:normal;color:#000;white-space:pre;letter-spacing:0.35px">Flow Control</div>
<svg style="position:absolute;left:14px;top:248px" width="16" height="13" shape-rendering="crispEdges"><rect x="10" y="0" width="6" height="1" fill="#6666aa"/><rect x="9" y="1" width="7" height="1" fill="#6666aa"/><rect x="0" y="2" width="16" height="1" fill="#000000"/><rect x="0" y="3" width="1" height="1" fill="#000000"/><rect x="1" y="3" width="14" height="1" fill="#ffffff"/><rect x="15" y="3" width="1" height="1" fill="#000000"/><rect x="0" y="4" width="1" height="1" fill="#000000"/><rect x="1" y="4" width="1" height="1" fill="#ffffff"/><rect x="2" y="4" width="12" height="1" fill="#ccccff"/><rect x="14" y="4" width="1" height="1" fill="#ffffff"/><rect x="15" y="4" width="1" height="1" fill="#000000"/><rect x="0" y="5" width="1" height="1" fill="#000000"/><rect x="1" y="5" width="1" height="1" fill="#ffffff"/><rect x="2" y="5" width="12" height="1" fill="#ccccff"/><rect x="14" y="5" width="1" height="1" fill="#ffffff"/><rect x="15" y="5" width="1" height="1" fill="#000000"/><rect x="0" y="6" width="1" height="1" fill="#000000"/><rect x="1" y="6" width="1" height="1" fill="#ffffff"/><rect x="2" y="6" width="12" height="1" fill="#ccccff"/><rect x="14" y="6" width="1" height="1" fill="#ffffff"/><rect x="15" y="6" width="1" height="1" fill="#000000"/><rect x="0" y="7" width="1" height="1" fill="#000000"/><rect x="1" y="7" width="1" height="1" fill="#ffffff"/><rect x="2" y="7" width="12" height="1" fill="#ccccff"/><rect x="14" y="7" width="1" height="1" fill="#ffffff"/><rect x="15" y="7" width="1" height="1" fill="#000000"/><rect x="0" y="8" width="1" height="1" fill="#000000"/><rect x="1" y="8" width="1" height="1" fill="#ffffff"/><rect x="2" y="8" width="12" height="1" fill="#ccccff"/><rect x="14" y="8" width="1" height="1" fill="#ffffff"/><rect x="15" y="8" width="1" height="1" fill="#000000"/><rect x="0" y="9" width="1" height="1" fill="#000000"/><rect x="1" y="9" width="1" height="1" fill="#ffffff"/><rect x="2" y="9" width="12" height="1" fill="#ccccff"/><rect x="14" y="9" width="1" height="1" fill="#ffffff"/><rect x="15" y="9" width="1" height="1" fill="#000000"/><rect x="0" y="10" width="1" height="1" fill="#000000"/><rect x="1" y="10" width="1" height="1" fill="#ffffff"/><rect x="2" y="10" width="12" height="1" fill="#ccccff"/><rect x="14" y="10" width="1" height="1" fill="#ffffff"/><rect x="15" y="10" width="1" height="1" fill="#000000"/><rect x="0" y="11" width="1" height="1" fill="#000000"/><rect x="1" y="11" width="1" height="1" fill="#ffffff"/><rect x="2" y="11" width="12" height="1" fill="#ccccff"/><rect x="14" y="11" width="1" height="1" fill="#ffffff"/><rect x="15" y="11" width="1" height="1" fill="#000000"/><rect x="0" y="12" width="16" height="1" fill="#000000"/></svg>
<div class="" style="left:35px;top:248.84px;font-size:12px;line-height:12px;font-weight:normal;color:#000;white-space:pre;letter-spacing:0.35px">Utilities</div>
<svg style="position:absolute;left:14px;top:265px" width="16" height="13" shape-rendering="crispEdges"><rect x="10" y="0" width="6" height="1" fill="#6666aa"/><rect x="9" y="1" width="7" height="1" fill="#6666aa"/><rect x="0" y="2" width="16" height="1" fill="#000000"/><rect x="0" y="3" width="1" height="1" fill="#000000"/><rect x="1" y="3" width="14" height="1" fill="#ffffff"/><rect x="15" y="3" width="1" height="1" fill="#000000"/><rect x="0" y="4" width="1" height="1" fill="#000000"/><rect x="1" y="4" width="1" height="1" fill="#ffffff"/><rect x="2" y="4" width="12" height="1" fill="#ccccff"/><rect x="14" y="4" width="1" height="1" fill="#ffffff"/><rect x="15" y="4" width="1" height="1" fill="#000000"/><rect x="0" y="5" width="1" height="1" fill="#000000"/><rect x="1" y="5" width="1" height="1" fill="#ffffff"/><rect x="2" y="5" width="12" height="1" fill="#ccccff"/><rect x="14" y="5" width="1" height="1" fill="#ffffff"/><rect x="15" y="5" width="1" height="1" fill="#000000"/><rect x="0" y="6" width="1" height="1" fill="#000000"/><rect x="1" y="6" width="1" height="1" fill="#ffffff"/><rect x="2" y="6" width="12" height="1" fill="#ccccff"/><rect x="14" y="6" width="1" height="1" fill="#ffffff"/><rect x="15" y="6" width="1" height="1" fill="#000000"/><rect x="0" y="7" width="1" height="1" fill="#000000"/><rect x="1" y="7" width="1" height="1" fill="#ffffff"/><rect x="2" y="7" width="12" height="1" fill="#ccccff"/><rect x="14" y="7" width="1" height="1" fill="#ffffff"/><rect x="15" y="7" width="1" height="1" fill="#000000"/><rect x="0" y="8" width="1" height="1" fill="#000000"/><rect x="1" y="8" width="1" height="1" fill="#ffffff"/><rect x="2" y="8" width="12" height="1" fill="#ccccff"/><rect x="14" y="8" width="1" height="1" fill="#ffffff"/><rect x="15" y="8" width="1" height="1" fill="#000000"/><rect x="0" y="9" width="1" height="1" fill="#000000"/><rect x="1" y="9" width="1" height="1" fill="#ffffff"/><rect x="2" y="9" width="12" height="1" fill="#ccccff"/><rect x="14" y="9" width="1" height="1" fill="#ffffff"/><rect x="15" y="9" width="1" height="1" fill="#000000"/><rect x="0" y="10" width="1" height="1" fill="#000000"/><rect x="1" y="10" width="1" height="1" fill="#ffffff"/><rect x="2" y="10" width="12" height="1" fill="#ccccff"/><rect x="14" y="10" width="1" height="1" fill="#ffffff"/><rect x="15" y="10" width="1" height="1" fill="#000000"/><rect x="0" y="11" width="1" height="1" fill="#000000"/><rect x="1" y="11" width="1" height="1" fill="#ffffff"/><rect x="2" y="11" width="12" height="1" fill="#ccccff"/><rect x="14" y="11" width="1" height="1" fill="#ffffff"/><rect x="15" y="11" width="1" height="1" fill="#000000"/><rect x="0" y="12" width="16" height="1" fill="#000000"/></svg>
<div class="" style="left:35px;top:265.84px;font-size:12px;line-height:12px;font-weight:normal;color:#000;white-space:pre;letter-spacing:0.35px">Arithmitic</div>
<svg style="position:absolute;left:14px;top:282px" width="16" height="13" shape-rendering="crispEdges"><rect x="10" y="0" width="6" height="1" fill="#6666aa"/><rect x="9" y="1" width="7" height="1" fill="#6666aa"/><rect x="0" y="2" width="16" height="1" fill="#000000"/><rect x="0" y="3" width="1" height="1" fill="#000000"/><rect x="1" y="3" width="14" height="1" fill="#ffffff"/><rect x="15" y="3" width="1" height="1" fill="#000000"/><rect x="0" y="4" width="1" height="1" fill="#000000"/><rect x="1" y="4" width="1" height="1" fill="#ffffff"/><rect x="2" y="4" width="12" height="1" fill="#ccccff"/><rect x="14" y="4" width="1" height="1" fill="#ffffff"/><rect x="15" y="4" width="1" height="1" fill="#000000"/><rect x="0" y="5" width="1" height="1" fill="#000000"/><rect x="1" y="5" width="1" height="1" fill="#ffffff"/><rect x="2" y="5" width="12" height="1" fill="#ccccff"/><rect x="14" y="5" width="1" height="1" fill="#ffffff"/><rect x="15" y="5" width="1" height="1" fill="#000000"/><rect x="0" y="6" width="1" height="1" fill="#000000"/><rect x="1" y="6" width="1" height="1" fill="#ffffff"/><rect x="2" y="6" width="12" height="1" fill="#ccccff"/><rect x="14" y="6" width="1" height="1" fill="#ffffff"/><rect x="15" y="6" width="1" height="1" fill="#000000"/><rect x="0" y="7" width="1" height="1" fill="#000000"/><rect x="1" y="7" width="1" height="1" fill="#ffffff"/><rect x="2" y="7" width="12" height="1" fill="#ccccff"/><rect x="14" y="7" width="1" height="1" fill="#ffffff"/><rect x="15" y="7" width="1" height="1" fill="#000000"/><rect x="0" y="8" width="1" height="1" fill="#000000"/><rect x="1" y="8" width="1" height="1" fill="#ffffff"/><rect x="2" y="8" width="12" height="1" fill="#ccccff"/><rect x="14" y="8" width="1" height="1" fill="#ffffff"/><rect x="15" y="8" width="1" height="1" fill="#000000"/><rect x="0" y="9" width="1" height="1" fill="#000000"/><rect x="1" y="9" width="1" height="1" fill="#ffffff"/><rect x="2" y="9" width="12" height="1" fill="#ccccff"/><rect x="14" y="9" width="1" height="1" fill="#ffffff"/><rect x="15" y="9" width="1" height="1" fill="#000000"/><rect x="0" y="10" width="1" height="1" fill="#000000"/><rect x="1" y="10" width="1" height="1" fill="#ffffff"/><rect x="2" y="10" width="12" height="1" fill="#ccccff"/><rect x="14" y="10" width="1" height="1" fill="#ffffff"/><rect x="15" y="10" width="1" height="1" fill="#000000"/><rect x="0" y="11" width="1" height="1" fill="#000000"/><rect x="1" y="11" width="1" height="1" fill="#ffffff"/><rect x="2" y="11" width="12" height="1" fill="#ccccff"/><rect x="14" y="11" width="1" height="1" fill="#ffffff"/><rect x="15" y="11" width="1" height="1" fill="#000000"/><rect x="0" y="12" width="16" height="1" fill="#000000"/></svg>
<div class="" style="left:35px;top:282.84px;font-size:12px;line-height:12px;font-weight:normal;color:#000;white-space:pre;letter-spacing:0.35px">Processing</div>
<svg style="position:absolute;left:14px;top:299px" width="16" height="13" shape-rendering="crispEdges"><rect x="10" y="0" width="6" height="1" fill="#6666aa"/><rect x="9" y="1" width="7" height="1" fill="#6666aa"/><rect x="0" y="2" width="16" height="1" fill="#000000"/><rect x="0" y="3" width="1" height="1" fill="#000000"/><rect x="1" y="3" width="14" height="1" fill="#ffffff"/><rect x="15" y="3" width="1" height="1" fill="#000000"/><rect x="0" y="4" width="1" height="1" fill="#000000"/><rect x="1" y="4" width="1" height="1" fill="#ffffff"/><rect x="2" y="4" width="12" height="1" fill="#ccccff"/><rect x="14" y="4" width="1" height="1" fill="#ffffff"/><rect x="15" y="4" width="1" height="1" fill="#000000"/><rect x="0" y="5" width="1" height="1" fill="#000000"/><rect x="1" y="5" width="1" height="1" fill="#ffffff"/><rect x="2" y="5" width="12" height="1" fill="#ccccff"/><rect x="14" y="5" width="1" height="1" fill="#ffffff"/><rect x="15" y="5" width="1" height="1" fill="#000000"/><rect x="0" y="6" width="1" height="1" fill="#000000"/><rect x="1" y="6" width="1" height="1" fill="#ffffff"/><rect x="2" y="6" width="12" height="1" fill="#ccccff"/><rect x="14" y="6" width="1" height="1" fill="#ffffff"/><rect x="15" y="6" width="1" height="1" fill="#000000"/><rect x="0" y="7" width="1" height="1" fill="#000000"/><rect x="1" y="7" width="1" height="1" fill="#ffffff"/><rect x="2" y="7" width="12" height="1" fill="#ccccff"/><rect x="14" y="7" width="1" height="1" fill="#ffffff"/><rect x="15" y="7" width="1" height="1" fill="#000000"/><rect x="0" y="8" width="1" height="1" fill="#000000"/><rect x="1" y="8" width="1" height="1" fill="#ffffff"/><rect x="2" y="8" width="12" height="1" fill="#ccccff"/><rect x="14" y="8" width="1" height="1" fill="#ffffff"/><rect x="15" y="8" width="1" height="1" fill="#000000"/><rect x="0" y="9" width="1" height="1" fill="#000000"/><rect x="1" y="9" width="1" height="1" fill="#ffffff"/><rect x="2" y="9" width="12" height="1" fill="#ccccff"/><rect x="14" y="9" width="1" height="1" fill="#ffffff"/><rect x="15" y="9" width="1" height="1" fill="#000000"/><rect x="0" y="10" width="1" height="1" fill="#000000"/><rect x="1" y="10" width="1" height="1" fill="#ffffff"/><rect x="2" y="10" width="12" height="1" fill="#ccccff"/><rect x="14" y="10" width="1" height="1" fill="#ffffff"/><rect x="15" y="10" width="1" height="1" fill="#000000"/><rect x="0" y="11" width="1" height="1" fill="#000000"/><rect x="1" y="11" width="1" height="1" fill="#ffffff"/><rect x="2" y="11" width="12" height="1" fill="#ccccff"/><rect x="14" y="11" width="1" height="1" fill="#ffffff"/><rect x="15" y="11" width="1" height="1" fill="#000000"/><rect x="0" y="12" width="16" height="1" fill="#000000"/></svg>
<div class="" style="left:35px;top:299.84px;font-size:12px;line-height:12px;font-weight:normal;color:#000;white-space:pre;letter-spacing:0.35px">Noise</div>
<svg style="position:absolute;left:14px;top:316px" width="16" height="13" shape-rendering="crispEdges"><rect x="10" y="0" width="6" height="1" fill="#6666aa"/><rect x="9" y="1" width="7" height="1" fill="#6666aa"/><rect x="0" y="2" width="16" height="1" fill="#000000"/><rect x="0" y="3" width="1" height="1" fill="#000000"/><rect x="1" y="3" width="14" height="1" fill="#ffffff"/><rect x="15" y="3" width="1" height="1" fill="#000000"/><rect x="0" y="4" width="1" height="1" fill="#000000"/><rect x="1" y="4" width="1" height="1" fill="#ffffff"/><rect x="2" y="4" width="12" height="1" fill="#ccccff"/><rect x="14" y="4" width="1" height="1" fill="#ffffff"/><rect x="15" y="4" width="1" height="1" fill="#000000"/><rect x="0" y="5" width="1" height="1" fill="#000000"/><rect x="1" y="5" width="1" height="1" fill="#ffffff"/><rect x="2" y="5" width="12" height="1" fill="#ccccff"/><rect x="14" y="5" width="1" height="1" fill="#ffffff"/><rect x="15" y="5" width="1" height="1" fill="#000000"/><rect x="0" y="6" width="1" height="1" fill="#000000"/><rect x="1" y="6" width="1" height="1" fill="#ffffff"/><rect x="2" y="6" width="12" height="1" fill="#ccccff"/><rect x="14" y="6" width="1" height="1" fill="#ffffff"/><rect x="15" y="6" width="1" height="1" fill="#000000"/><rect x="0" y="7" width="1" height="1" fill="#000000"/><rect x="1" y="7" width="1" height="1" fill="#ffffff"/><rect x="2" y="7" width="12" height="1" fill="#ccccff"/><rect x="14" y="7" width="1" height="1" fill="#ffffff"/><rect x="15" y="7" width="1" height="1" fill="#000000"/><rect x="0" y="8" width="1" height="1" fill="#000000"/><rect x="1" y="8" width="1" height="1" fill="#ffffff"/><rect x="2" y="8" width="12" height="1" fill="#ccccff"/><rect x="14" y="8" width="1" height="1" fill="#ffffff"/><rect x="15" y="8" width="1" height="1" fill="#000000"/><rect x="0" y="9" width="1" height="1" fill="#000000"/><rect x="1" y="9" width="1" height="1" fill="#ffffff"/><rect x="2" y="9" width="12" height="1" fill="#ccccff"/><rect x="14" y="9" width="1" height="1" fill="#ffffff"/><rect x="15" y="9" width="1" height="1" fill="#000000"/><rect x="0" y="10" width="1" height="1" fill="#000000"/><rect x="1" y="10" width="1" height="1" fill="#ffffff"/><rect x="2" y="10" width="12" height="1" fill="#ccccff"/><rect x="14" y="10" width="1" height="1" fill="#ffffff"/><rect x="15" y="10" width="1" height="1" fill="#000000"/><rect x="0" y="11" width="1" height="1" fill="#000000"/><rect x="1" y="11" width="1" height="1" fill="#ffffff"/><rect x="2" y="11" width="12" height="1" fill="#ccccff"/><rect x="14" y="11" width="1" height="1" fill="#ffffff"/><rect x="15" y="11" width="1" height="1" fill="#000000"/><rect x="0" y="12" width="16" height="1" fill="#000000"/></svg>
<div class="" style="left:35px;top:316.84px;font-size:12px;line-height:12px;font-weight:normal;color:#000;white-space:pre;letter-spacing:0.35px">Filter</div>
<svg style="position:absolute;left:14px;top:333px" width="16" height="13" shape-rendering="crispEdges"><rect x="10" y="0" width="6" height="1" fill="#6666aa"/><rect x="9" y="1" width="7" height="1" fill="#6666aa"/><rect x="0" y="2" width="16" height="1" fill="#000000"/><rect x="0" y="3" width="1" height="1" fill="#000000"/><rect x="1" y="3" width="14" height="1" fill="#ffffff"/><rect x="15" y="3" width="1" height="1" fill="#000000"/><rect x="0" y="4" width="1" height="1" fill="#000000"/><rect x="1" y="4" width="1" height="1" fill="#ffffff"/><rect x="2" y="4" width="12" height="1" fill="#ccccff"/><rect x="14" y="4" width="1" height="1" fill="#ffffff"/><rect x="15" y="4" width="1" height="1" fill="#000000"/><rect x="0" y="5" width="1" height="1" fill="#000000"/><rect x="1" y="5" width="1" height="1" fill="#ffffff"/><rect x="2" y="5" width="12" height="1" fill="#ccccff"/><rect x="14" y="5" width="1" height="1" fill="#ffffff"/><rect x="15" y="5" width="1" height="1" fill="#000000"/><rect x="0" y="6" width="1" height="1" fill="#000000"/><rect x="1" y="6" width="1" height="1" fill="#ffffff"/><rect x="2" y="6" width="12" height="1" fill="#ccccff"/><rect x="14" y="6" width="1" height="1" fill="#ffffff"/><rect x="15" y="6" width="1" height="1" fill="#000000"/><rect x="0" y="7" width="1" height="1" fill="#000000"/><rect x="1" y="7" width="1" height="1" fill="#ffffff"/><rect x="2" y="7" width="12" height="1" fill="#ccccff"/><rect x="14" y="7" width="1" height="1" fill="#ffffff"/><rect x="15" y="7" width="1" height="1" fill="#000000"/><rect x="0" y="8" width="1" height="1" fill="#000000"/><rect x="1" y="8" width="1" height="1" fill="#ffffff"/><rect x="2" y="8" width="12" height="1" fill="#ccccff"/><rect x="14" y="8" width="1" height="1" fill="#ffffff"/><rect x="15" y="8" width="1" height="1" fill="#000000"/><rect x="0" y="9" width="1" height="1" fill="#000000"/><rect x="1" y="9" width="1" height="1" fill="#ffffff"/><rect x="2" y="9" width="12" height="1" fill="#ccccff"/><rect x="14" y="9" width="1" height="1" fill="#ffffff"/><rect x="15" y="9" width="1" height="1" fill="#000000"/><rect x="0" y="10" width="1" height="1" fill="#000000"/><rect x="1" y="10" width="1" height="1" fill="#ffffff"/><rect x="2" y="10" width="12" height="1" fill="#ccccff"/><rect x="14" y="10" width="1" height="1" fill="#ffffff"/><rect x="15" y="10" width="1" height="1" fill="#000000"/><rect x="0" y="11" width="1" height="1" fill="#000000"/><rect x="1" y="11" width="1" height="1" fill="#ffffff"/><rect x="2" y="11" width="12" height="1" fill="#ccccff"/><rect x="14" y="11" width="1" height="1" fill="#ffffff"/><rect x="15" y="11" width="1" height="1" fill="#000000"/><rect x="0" y="12" width="16" height="1" fill="#000000"/></svg>
<div class="" style="left:35px;top:333.84px;font-size:12px;line-height:12px;font-weight:normal;color:#000;white-space:pre;letter-spacing:0.35px">Analysis</div>
<svg style="position:absolute;left:14px;top:350px" width="16" height="13" shape-rendering="crispEdges"><rect x="10" y="0" width="6" height="1" fill="#6666aa"/><rect x="9" y="1" width="7" height="1" fill="#6666aa"/><rect x="0" y="2" width="16" height="1" fill="#000000"/><rect x="0" y="3" width="1" height="1" fill="#000000"/><rect x="1" y="3" width="14" height="1" fill="#ffffff"/><rect x="15" y="3" width="1" height="1" fill="#000000"/><rect x="0" y="4" width="1" height="1" fill="#000000"/><rect x="1" y="4" width="1" height="1" fill="#ffffff"/><rect x="2" y="4" width="12" height="1" fill="#ccccff"/><rect x="14" y="4" width="1" height="1" fill="#ffffff"/><rect x="15" y="4" width="1" height="1" fill="#000000"/><rect x="0" y="5" width="1" height="1" fill="#000000"/><rect x="1" y="5" width="1" height="1" fill="#ffffff"/><rect x="2" y="5" width="12" height="1" fill="#ccccff"/><rect x="14" y="5" width="1" height="1" fill="#ffffff"/><rect x="15" y="5" width="1" height="1" fill="#000000"/><rect x="0" y="6" width="1" height="1" fill="#000000"/><rect x="1" y="6" width="1" height="1" fill="#ffffff"/><rect x="2" y="6" width="12" height="1" fill="#ccccff"/><rect x="14" y="6" width="1" height="1" fill="#ffffff"/><rect x="15" y="6" width="1" height="1" fill="#000000"/><rect x="0" y="7" width="1" height="1" fill="#000000"/><rect x="1" y="7" width="1" height="1" fill="#ffffff"/><rect x="2" y="7" width="12" height="1" fill="#ccccff"/><rect x="14" y="7" width="1" height="1" fill="#ffffff"/><rect x="15" y="7" width="1" height="1" fill="#000000"/><rect x="0" y="8" width="1" height="1" fill="#000000"/><rect x="1" y="8" width="1" height="1" fill="#ffffff"/><rect x="2" y="8" width="12" height="1" fill="#ccccff"/><rect x="14" y="8" width="1" height="1" fill="#ffffff"/><rect x="15" y="8" width="1" height="1" fill="#000000"/><rect x="0" y="9" width="1" height="1" fill="#000000"/><rect x="1" y="9" width="1" height="1" fill="#ffffff"/><rect x="2" y="9" width="12" height="1" fill="#ccccff"/><rect x="14" y="9" width="1" height="1" fill="#ffffff"/><rect x="15" y="9" width="1" height="1" fill="#000000"/><rect x="0" y="10" width="1" height="1" fill="#000000"/><rect x="1" y="10" width="1" height="1" fill="#ffffff"/><rect x="2" y="10" width="12" height="1" fill="#ccccff"/><rect x="14" y="10" width="1" height="1" fill="#ffffff"/><rect x="15" y="10" width="1" height="1" fill="#000000"/><rect x="0" y="11" width="1" height="1" fill="#000000"/><rect x="1" y="11" width="1" height="1" fill="#ffffff"/><rect x="2" y="11" width="12" height="1" fill="#ccccff"/><rect x="14" y="11" width="1" height="1" fill="#ffffff"/><rect x="15" y="11" width="1" height="1" fill="#000000"/><rect x="0" y="12" width="16" height="1" fill="#000000"/></svg>
<div class="" style="left:35px;top:350.84px;font-size:12px;line-height:12px;font-weight:normal;color:#000;white-space:pre;letter-spacing:0.35px">Label</div>
<svg style="position:absolute;left:14px;top:367px" width="16" height="13" shape-rendering="crispEdges"><rect x="10" y="0" width="6" height="1" fill="#6666aa"/><rect x="9" y="1" width="7" height="1" fill="#6666aa"/><rect x="0" y="2" width="16" height="1" fill="#000000"/><rect x="0" y="3" width="1" height="1" fill="#000000"/><rect x="1" y="3" width="14" height="1" fill="#ffffff"/><rect x="15" y="3" width="1" height="1" fill="#000000"/><rect x="0" y="4" width="1" height="1" fill="#000000"/><rect x="1" y="4" width="1" height="1" fill="#ffffff"/><rect x="2" y="4" width="12" height="1" fill="#ccccff"/><rect x="14" y="4" width="1" height="1" fill="#ffffff"/><rect x="15" y="4" width="1" height="1" fill="#000000"/><rect x="0" y="5" width="1" height="1" fill="#000000"/><rect x="1" y="5" width="1" height="1" fill="#ffffff"/><rect x="2" y="5" width="12" height="1" fill="#ccccff"/><rect x="14" y="5" width="1" height="1" fill="#ffffff"/><rect x="15" y="5" width="1" height="1" fill="#000000"/><rect x="0" y="6" width="1" height="1" fill="#000000"/><rect x="1" y="6" width="1" height="1" fill="#ffffff"/><rect x="2" y="6" width="12" height="1" fill="#ccccff"/><rect x="14" y="6" width="1" height="1" fill="#ffffff"/><rect x="15" y="6" width="1" height="1" fill="#000000"/><rect x="0" y="7" width="1" height="1" fill="#000000"/><rect x="1" y="7" width="1" height="1" fill="#ffffff"/><rect x="2" y="7" width="12" height="1" fill="#ccccff"/><rect x="14" y="7" width="1" height="1" fill="#ffffff"/><rect x="15" y="7" width="1" height="1" fill="#000000"/><rect x="0" y="8" width="1" height="1" fill="#000000"/><rect x="1" y="8" width="1" height="1" fill="#ffffff"/><rect x="2" y="8" width="12" height="1" fill="#ccccff"/><rect x="14" y="8" width="1" height="1" fill="#ffffff"/><rect x="15" y="8" width="1" height="1" fill="#000000"/><rect x="0" y="9" width="1" height="1" fill="#000000"/><rect x="1" y="9" width="1" height="1" fill="#ffffff"/><rect x="2" y="9" width="12" height="1" fill="#ccccff"/><rect x="14" y="9" width="1" height="1" fill="#ffffff"/><rect x="15" y="9" width="1" height="1" fill="#000000"/><rect x="0" y="10" width="1" height="1" fill="#000000"/><rect x="1" y="10" width="1" height="1" fill="#ffffff"/><rect x="2" y="10" width="12" height="1" fill="#ccccff"/><rect x="14" y="10" width="1" height="1" fill="#ffffff"/><rect x="15" y="10" width="1" height="1" fill="#000000"/><rect x="0" y="11" width="1" height="1" fill="#000000"/><rect x="1" y="11" width="1" height="1" fill="#ffffff"/><rect x="2" y="11" width="12" height="1" fill="#ccccff"/><rect x="14" y="11" width="1" height="1" fill="#ffffff"/><rect x="15" y="11" width="1" height="1" fill="#000000"/><rect x="0" y="12" width="16" height="1" fill="#000000"/></svg>
<div class="" style="left:35px;top:367.84px;font-size:12px;line-height:12px;font-weight:normal;color:#000;white-space:pre;letter-spacing:0.35px">Transform</div>
<svg style="position:absolute;left:14px;top:384px" width="16" height="13" shape-rendering="crispEdges"><rect x="10" y="0" width="6" height="1" fill="#6666aa"/><rect x="9" y="1" width="7" height="1" fill="#6666aa"/><rect x="0" y="2" width="16" height="1" fill="#000000"/><rect x="0" y="3" width="1" height="1" fill="#000000"/><rect x="1" y="3" width="14" height="1" fill="#ffffff"/><rect x="15" y="3" width="1" height="1" fill="#000000"/><rect x="0" y="4" width="1" height="1" fill="#000000"/><rect x="1" y="4" width="1" height="1" fill="#ffffff"/><rect x="2" y="4" width="12" height="1" fill="#ccccff"/><rect x="14" y="4" width="1" height="1" fill="#ffffff"/><rect x="15" y="4" width="1" height="1" fill="#000000"/><rect x="0" y="5" width="1" height="1" fill="#000000"/><rect x="1" y="5" width="1" height="1" fill="#ffffff"/><rect x="2" y="5" width="12" height="1" fill="#ccccff"/><rect x="14" y="5" width="1" height="1" fill="#ffffff"/><rect x="15" y="5" width="1" height="1" fill="#000000"/><rect x="0" y="6" width="1" height="1" fill="#000000"/><rect x="1" y="6" width="1" height="1" fill="#ffffff"/><rect x="2" y="6" width="12" height="1" fill="#ccccff"/><rect x="14" y="6" width="1" height="1" fill="#ffffff"/><rect x="15" y="6" width="1" height="1" fill="#000000"/><rect x="0" y="7" width="1" height="1" fill="#000000"/><rect x="1" y="7" width="1" height="1" fill="#ffffff"/><rect x="2" y="7" width="12" height="1" fill="#ccccff"/><rect x="14" y="7" width="1" height="1" fill="#ffffff"/><rect x="15" y="7" width="1" height="1" fill="#000000"/><rect x="0" y="8" width="1" height="1" fill="#000000"/><rect x="1" y="8" width="1" height="1" fill="#ffffff"/><rect x="2" y="8" width="12" height="1" fill="#ccccff"/><rect x="14" y="8" width="1" height="1" fill="#ffffff"/><rect x="15" y="8" width="1" height="1" fill="#000000"/><rect x="0" y="9" width="1" height="1" fill="#000000"/><rect x="1" y="9" width="1" height="1" fill="#ffffff"/><rect x="2" y="9" width="12" height="1" fill="#ccccff"/><rect x="14" y="9" width="1" height="1" fill="#ffffff"/><rect x="15" y="9" width="1" height="1" fill="#000000"/><rect x="0" y="10" width="1" height="1" fill="#000000"/><rect x="1" y="10" width="1" height="1" fill="#ffffff"/><rect x="2" y="10" width="12" height="1" fill="#ccccff"/><rect x="14" y="10" width="1" height="1" fill="#ffffff"/><rect x="15" y="10" width="1" height="1" fill="#000000"/><rect x="0" y="11" width="1" height="1" fill="#000000"/><rect x="1" y="11" width="1" height="1" fill="#ffffff"/><rect x="2" y="11" width="12" height="1" fill="#ccccff"/><rect x="14" y="11" width="1" height="1" fill="#ffffff"/><rect x="15" y="11" width="1" height="1" fill="#000000"/><rect x="0" y="12" width="16" height="1" fill="#000000"/></svg>
<div class="" style="left:35px;top:384.84px;font-size:12px;line-height:12px;font-weight:normal;color:#000;white-space:pre;letter-spacing:0.35px">Colour</div>
<svg style="position:absolute;left:14px;top:401px" width="16" height="13" shape-rendering="crispEdges"><rect x="10" y="0" width="6" height="1" fill="#6666aa"/><rect x="9" y="1" width="7" height="1" fill="#6666aa"/><rect x="0" y="2" width="16" height="1" fill="#000000"/><rect x="0" y="3" width="1" height="1" fill="#000000"/><rect x="1" y="3" width="14" height="1" fill="#ffffff"/><rect x="15" y="3" width="1" height="1" fill="#000000"/><rect x="0" y="4" width="1" height="1" fill="#000000"/><rect x="1" y="4" width="1" height="1" fill="#ffffff"/><rect x="2" y="4" width="12" height="1" fill="#ccccff"/><rect x="14" y="4" width="1" height="1" fill="#ffffff"/><rect x="15" y="4" width="1" height="1" fill="#000000"/><rect x="0" y="5" width="1" height="1" fill="#000000"/><rect x="1" y="5" width="1" height="1" fill="#ffffff"/><rect x="2" y="5" width="12" height="1" fill="#ccccff"/><rect x="14" y="5" width="1" height="1" fill="#ffffff"/><rect x="15" y="5" width="1" height="1" fill="#000000"/><rect x="0" y="6" width="1" height="1" fill="#000000"/><rect x="1" y="6" width="1" height="1" fill="#ffffff"/><rect x="2" y="6" width="12" height="1" fill="#ccccff"/><rect x="14" y="6" width="1" height="1" fill="#ffffff"/><rect x="15" y="6" width="1" height="1" fill="#000000"/><rect x="0" y="7" width="1" height="1" fill="#000000"/><rect x="1" y="7" width="1" height="1" fill="#ffffff"/><rect x="2" y="7" width="12" height="1" fill="#ccccff"/><rect x="14" y="7" width="1" height="1" fill="#ffffff"/><rect x="15" y="7" width="1" height="1" fill="#000000"/><rect x="0" y="8" width="1" height="1" fill="#000000"/><rect x="1" y="8" width="1" height="1" fill="#ffffff"/><rect x="2" y="8" width="12" height="1" fill="#ccccff"/><rect x="14" y="8" width="1" height="1" fill="#ffffff"/><rect x="15" y="8" width="1" height="1" fill="#000000"/><rect x="0" y="9" width="1" height="1" fill="#000000"/><rect x="1" y="9" width="1" height="1" fill="#ffffff"/><rect x="2" y="9" width="12" height="1" fill="#ccccff"/><rect x="14" y="9" width="1" height="1" fill="#ffffff"/><rect x="15" y="9" width="1" height="1" fill="#000000"/><rect x="0" y="10" width="1" height="1" fill="#000000"/><rect x="1" y="10" width="1" height="1" fill="#ffffff"/><rect x="2" y="10" width="12" height="1" fill="#ccccff"/><rect x="14" y="10" width="1" height="1" fill="#ffffff"/><rect x="15" y="10" width="1" height="1" fill="#000000"/><rect x="0" y="11" width="1" height="1" fill="#000000"/><rect x="1" y="11" width="1" height="1" fill="#ffffff"/><rect x="2" y="11" width="12" height="1" fill="#ccccff"/><rect x="14" y="11" width="1" height="1" fill="#ffffff"/><rect x="15" y="11" width="1" height="1" fill="#000000"/><rect x="0" y="12" width="16" height="1" fill="#000000"/></svg>
<div class="" style="left:35px;top:401.84px;font-size:12px;line-height:12px;font-weight:normal;color:#000;white-space:pre;letter-spacing:0.35px">Morphology</div>
<svg style="position:absolute;left:14px;top:418px" width="16" height="13" shape-rendering="crispEdges"><rect x="10" y="0" width="6" height="1" fill="#6666aa"/><rect x="9" y="1" width="7" height="1" fill="#6666aa"/><rect x="0" y="2" width="16" height="1" fill="#000000"/><rect x="0" y="3" width="1" height="1" fill="#000000"/><rect x="1" y="3" width="14" height="1" fill="#ffffff"/><rect x="15" y="3" width="1" height="1" fill="#000000"/><rect x="0" y="4" width="1" height="1" fill="#000000"/><rect x="1" y="4" width="1" height="1" fill="#ffffff"/><rect x="2" y="4" width="12" height="1" fill="#ccccff"/><rect x="14" y="4" width="1" height="1" fill="#ffffff"/><rect x="15" y="4" width="1" height="1" fill="#000000"/><rect x="0" y="5" width="1" height="1" fill="#000000"/><rect x="1" y="5" width="1" height="1" fill="#ffffff"/><rect x="2" y="5" width="12" height="1" fill="#ccccff"/><rect x="14" y="5" width="1" height="1" fill="#ffffff"/><rect x="15" y="5" width="1" height="1" fill="#000000"/><rect x="0" y="6" width="1" height="1" fill="#000000"/><rect x="1" y="6" width="1" height="1" fill="#ffffff"/><rect x="2" y="6" width="12" height="1" fill="#ccccff"/><rect x="14" y="6" width="1" height="1" fill="#ffffff"/><rect x="15" y="6" width="1" height="1" fill="#000000"/><rect x="0" y="7" width="1" height="1" fill="#000000"/><rect x="1" y="7" width="1" height="1" fill="#ffffff"/><rect x="2" y="7" width="12" height="1" fill="#ccccff"/><rect x="14" y="7" width="1" height="1" fill="#ffffff"/><rect x="15" y="7" width="1" height="1" fill="#000000"/><rect x="0" y="8" width="1" height="1" fill="#000000"/><rect x="1" y="8" width="1" height="1" fill="#ffffff"/><rect x="2" y="8" width="12" height="1" fill="#ccccff"/><rect x="14" y="8" width="1" height="1" fill="#ffffff"/><rect x="15" y="8" width="1" height="1" fill="#000000"/><rect x="0" y="9" width="1" height="1" fill="#000000"/><rect x="1" y="9" width="1" height="1" fill="#ffffff"/><rect x="2" y="9" width="12" height="1" fill="#ccccff"/><rect x="14" y="9" width="1" height="1" fill="#ffffff"/><rect x="15" y="9" width="1" height="1" fill="#000000"/><rect x="0" y="10" width="1" height="1" fill="#000000"/><rect x="1" y="10" width="1" height="1" fill="#ffffff"/><rect x="2" y="10" width="12" height="1" fill="#ccccff"/><rect x="14" y="10" width="1" height="1" fill="#ffffff"/><rect x="15" y="10" width="1" height="1" fill="#000000"/><rect x="0" y="11" width="1" height="1" fill="#000000"/><rect x="1" y="11" width="1" height="1" fill="#ffffff"/><rect x="2" y="11" width="12" height="1" fill="#ccccff"/><rect x="14" y="11" width="1" height="1" fill="#ffffff"/><rect x="15" y="11" width="1" height="1" fill="#000000"/><rect x="0" y="12" width="16" height="1" fill="#000000"/></svg>
<div class="" style="left:35px;top:418.84px;font-size:12px;line-height:12px;font-weight:normal;color:#000;white-space:pre;letter-spacing:0.35px">Histogram</div>
<svg style="position:absolute;left:14px;top:435px" width="16" height="13" shape-rendering="crispEdges"><rect x="10" y="0" width="6" height="1" fill="#6666aa"/><rect x="9" y="1" width="7" height="1" fill="#6666aa"/><rect x="0" y="2" width="16" height="1" fill="#000000"/><rect x="0" y="3" width="1" height="1" fill="#000000"/><rect x="1" y="3" width="14" height="1" fill="#ffffff"/><rect x="15" y="3" width="1" height="1" fill="#000000"/><rect x="0" y="4" width="1" height="1" fill="#000000"/><rect x="1" y="4" width="1" height="1" fill="#ffffff"/><rect x="2" y="4" width="12" height="1" fill="#ccccff"/><rect x="14" y="4" width="1" height="1" fill="#ffffff"/><rect x="15" y="4" width="1" height="1" fill="#000000"/><rect x="0" y="5" width="1" height="1" fill="#000000"/><rect x="1" y="5" width="1" height="1" fill="#ffffff"/><rect x="2" y="5" width="12" height="1" fill="#ccccff"/><rect x="14" y="5" width="1" height="1" fill="#ffffff"/><rect x="15" y="5" width="1" height="1" fill="#000000"/><rect x="0" y="6" width="1" height="1" fill="#000000"/><rect x="1" y="6" width="1" height="1" fill="#ffffff"/><rect x="2" y="6" width="12" height="1" fill="#ccccff"/><rect x="14" y="6" width="1" height="1" fill="#ffffff"/><rect x="15" y="6" width="1" height="1" fill="#000000"/><rect x="0" y="7" width="1" height="1" fill="#000000"/><rect x="1" y="7" width="1" height="1" fill="#ffffff"/><rect x="2" y="7" width="12" height="1" fill="#ccccff"/><rect x="14" y="7" width="1" height="1" fill="#ffffff"/><rect x="15" y="7" width="1" height="1" fill="#000000"/><rect x="0" y="8" width="1" height="1" fill="#000000"/><rect x="1" y="8" width="1" height="1" fill="#ffffff"/><rect x="2" y="8" width="12" height="1" fill="#ccccff"/><rect x="14" y="8" width="1" height="1" fill="#ffffff"/><rect x="15" y="8" width="1" height="1" fill="#000000"/><rect x="0" y="9" width="1" height="1" fill="#000000"/><rect x="1" y="9" width="1" height="1" fill="#ffffff"/><rect x="2" y="9" width="12" height="1" fill="#ccccff"/><rect x="14" y="9" width="1" height="1" fill="#ffffff"/><rect x="15" y="9" width="1" height="1" fill="#000000"/><rect x="0" y="10" width="1" height="1" fill="#000000"/><rect x="1" y="10" width="1" height="1" fill="#ffffff"/><rect x="2" y="10" width="12" height="1" fill="#ccccff"/><rect x="14" y="10" width="1" height="1" fill="#ffffff"/><rect x="15" y="10" width="1" height="1" fill="#000000"/><rect x="0" y="11" width="1" height="1" fill="#000000"/><rect x="1" y="11" width="1" height="1" fill="#ffffff"/><rect x="2" y="11" width="12" height="1" fill="#ccccff"/><rect x="14" y="11" width="1" height="1" fill="#ffffff"/><rect x="15" y="11" width="1" height="1" fill="#000000"/><rect x="0" y="12" width="16" height="1" fill="#000000"/></svg>
<div class="" style="left:35px;top:435.84px;font-size:12px;line-height:12px;font-weight:normal;color:#000;white-space:pre;letter-spacing:0.35px">Maths</div>
<svg style="position:absolute;left:14px;top:452px" width="16" height="13" shape-rendering="crispEdges"><rect x="10" y="0" width="6" height="1" fill="#6666aa"/><rect x="9" y="1" width="7" height="1" fill="#6666aa"/><rect x="0" y="2" width="16" height="1" fill="#000000"/><rect x="0" y="3" width="1" height="1" fill="#000000"/><rect x="1" y="3" width="14" height="1" fill="#ffffff"/><rect x="15" y="3" width="1" height="1" fill="#000000"/><rect x="0" y="4" width="1" height="1" fill="#000000"/><rect x="1" y="4" width="1" height="1" fill="#ffffff"/><rect x="2" y="4" width="12" height="1" fill="#ccccff"/><rect x="14" y="4" width="1" height="1" fill="#ffffff"/><rect x="15" y="4" width="1" height="1" fill="#000000"/><rect x="0" y="5" width="1" height="1" fill="#000000"/><rect x="1" y="5" width="1" height="1" fill="#ffffff"/><rect x="2" y="5" width="12" height="1" fill="#ccccff"/><rect x="14" y="5" width="1" height="1" fill="#ffffff"/><rect x="15" y="5" width="1" height="1" fill="#000000"/><rect x="0" y="6" width="1" height="1" fill="#000000"/><rect x="1" y="6" width="1" height="1" fill="#ffffff"/><rect x="2" y="6" width="12" height="1" fill="#ccccff"/><rect x="14" y="6" width="1" height="1" fill="#ffffff"/><rect x="15" y="6" width="1" height="1" fill="#000000"/><rect x="0" y="7" width="1" height="1" fill="#000000"/><rect x="1" y="7" width="1" height="1" fill="#ffffff"/><rect x="2" y="7" width="12" height="1" fill="#ccccff"/><rect x="14" y="7" width="1" height="1" fill="#ffffff"/><rect x="15" y="7" width="1" height="1" fill="#000000"/><rect x="0" y="8" width="1" height="1" fill="#000000"/><rect x="1" y="8" width="1" height="1" fill="#ffffff"/><rect x="2" y="8" width="12" height="1" fill="#ccccff"/><rect x="14" y="8" width="1" height="1" fill="#ffffff"/><rect x="15" y="8" width="1" height="1" fill="#000000"/><rect x="0" y="9" width="1" height="1" fill="#000000"/><rect x="1" y="9" width="1" height="1" fill="#ffffff"/><rect x="2" y="9" width="12" height="1" fill="#ccccff"/><rect x="14" y="9" width="1" height="1" fill="#ffffff"/><rect x="15" y="9" width="1" height="1" fill="#000000"/><rect x="0" y="10" width="1" height="1" fill="#000000"/><rect x="1" y="10" width="1" height="1" fill="#ffffff"/><rect x="2" y="10" width="12" height="1" fill="#ccccff"/><rect x="14" y="10" width="1" height="1" fill="#ffffff"/><rect x="15" y="10" width="1" height="1" fill="#000000"/><rect x="0" y="11" width="1" height="1" fill="#000000"/><rect x="1" y="11" width="1" height="1" fill="#ffffff"/><rect x="2" y="11" width="12" height="1" fill="#ccccff"/><rect x="14" y="11" width="1" height="1" fill="#ffffff"/><rect x="15" y="11" width="1" height="1" fill="#000000"/><rect x="0" y="12" width="16" height="1" fill="#000000"/></svg>
<div class="" style="left:35px;top:452.84px;font-size:12px;line-height:12px;font-weight:normal;color:#000;white-space:pre;letter-spacing:0.35px">LowLevel</div>
<svg style="position:absolute;left:14px;top:469px" width="16" height="13" shape-rendering="crispEdges"><rect x="10" y="0" width="6" height="1" fill="#6666aa"/><rect x="9" y="1" width="7" height="1" fill="#6666aa"/><rect x="0" y="2" width="16" height="1" fill="#000000"/><rect x="0" y="3" width="1" height="1" fill="#000000"/><rect x="1" y="3" width="14" height="1" fill="#ffffff"/><rect x="15" y="3" width="1" height="1" fill="#000000"/><rect x="0" y="4" width="1" height="1" fill="#000000"/><rect x="1" y="4" width="1" height="1" fill="#ffffff"/><rect x="2" y="4" width="12" height="1" fill="#ccccff"/><rect x="14" y="4" width="1" height="1" fill="#ffffff"/><rect x="15" y="4" width="1" height="1" fill="#000000"/><rect x="0" y="5" width="1" height="1" fill="#000000"/><rect x="1" y="5" width="1" height="1" fill="#ffffff"/><rect x="2" y="5" width="12" height="1" fill="#ccccff"/><rect x="14" y="5" width="1" height="1" fill="#ffffff"/><rect x="15" y="5" width="1" height="1" fill="#000000"/><rect x="0" y="6" width="1" height="1" fill="#000000"/><rect x="1" y="6" width="1" height="1" fill="#ffffff"/><rect x="2" y="6" width="12" height="1" fill="#ccccff"/><rect x="14" y="6" width="1" height="1" fill="#ffffff"/><rect x="15" y="6" width="1" height="1" fill="#000000"/><rect x="0" y="7" width="1" height="1" fill="#000000"/><rect x="1" y="7" width="1" height="1" fill="#ffffff"/><rect x="2" y="7" width="12" height="1" fill="#ccccff"/><rect x="14" y="7" width="1" height="1" fill="#ffffff"/><rect x="15" y="7" width="1" height="1" fill="#000000"/><rect x="0" y="8" width="1" height="1" fill="#000000"/><rect x="1" y="8" width="1" height="1" fill="#ffffff"/><rect x="2" y="8" width="12" height="1" fill="#ccccff"/><rect x="14" y="8" width="1" height="1" fill="#ffffff"/><rect x="15" y="8" width="1" height="1" fill="#000000"/><rect x="0" y="9" width="1" height="1" fill="#000000"/><rect x="1" y="9" width="1" height="1" fill="#ffffff"/><rect x="2" y="9" width="12" height="1" fill="#ccccff"/><rect x="14" y="9" width="1" height="1" fill="#ffffff"/><rect x="15" y="9" width="1" height="1" fill="#000000"/><rect x="0" y="10" width="1" height="1" fill="#000000"/><rect x="1" y="10" width="1" height="1" fill="#ffffff"/><rect x="2" y="10" width="12" height="1" fill="#ccccff"/><rect x="14" y="10" width="1" height="1" fill="#ffffff"/><rect x="15" y="10" width="1" height="1" fill="#000000"/><rect x="0" y="11" width="1" height="1" fill="#000000"/><rect x="1" y="11" width="1" height="1" fill="#ffffff"/><rect x="2" y="11" width="12" height="1" fill="#ccccff"/><rect x="14" y="11" width="1" height="1" fill="#ffffff"/><rect x="15" y="11" width="1" height="1" fill="#000000"/><rect x="0" y="12" width="16" height="1" fill="#000000"/></svg>
<div class="" style="left:35px;top:469.84px;font-size:12px;line-height:12px;font-weight:normal;color:#000;white-space:pre;letter-spacing:0.35px">String</div>
<svg style="position:absolute;left:14px;top:486px" width="16" height="13" shape-rendering="crispEdges"><rect x="10" y="0" width="6" height="1" fill="#6666aa"/><rect x="9" y="1" width="7" height="1" fill="#6666aa"/><rect x="0" y="2" width="16" height="1" fill="#000000"/><rect x="0" y="3" width="1" height="1" fill="#000000"/><rect x="1" y="3" width="14" height="1" fill="#ffffff"/><rect x="15" y="3" width="1" height="1" fill="#000000"/><rect x="0" y="4" width="1" height="1" fill="#000000"/><rect x="1" y="4" width="1" height="1" fill="#ffffff"/><rect x="2" y="4" width="12" height="1" fill="#ccccff"/><rect x="14" y="4" width="1" height="1" fill="#ffffff"/><rect x="15" y="4" width="1" height="1" fill="#000000"/><rect x="0" y="5" width="1" height="1" fill="#000000"/><rect x="1" y="5" width="1" height="1" fill="#ffffff"/><rect x="2" y="5" width="12" height="1" fill="#ccccff"/><rect x="14" y="5" width="1" height="1" fill="#ffffff"/><rect x="15" y="5" width="1" height="1" fill="#000000"/><rect x="0" y="6" width="1" height="1" fill="#000000"/><rect x="1" y="6" width="1" height="1" fill="#ffffff"/><rect x="2" y="6" width="12" height="1" fill="#ccccff"/><rect x="14" y="6" width="1" height="1" fill="#ffffff"/><rect x="15" y="6" width="1" height="1" fill="#000000"/><rect x="0" y="7" width="1" height="1" fill="#000000"/><rect x="1" y="7" width="1" height="1" fill="#ffffff"/><rect x="2" y="7" width="12" height="1" fill="#ccccff"/><rect x="14" y="7" width="1" height="1" fill="#ffffff"/><rect x="15" y="7" width="1" height="1" fill="#000000"/><rect x="0" y="8" width="1" height="1" fill="#000000"/><rect x="1" y="8" width="1" height="1" fill="#ffffff"/><rect x="2" y="8" width="12" height="1" fill="#ccccff"/><rect x="14" y="8" width="1" height="1" fill="#ffffff"/><rect x="15" y="8" width="1" height="1" fill="#000000"/><rect x="0" y="9" width="1" height="1" fill="#000000"/><rect x="1" y="9" width="1" height="1" fill="#ffffff"/><rect x="2" y="9" width="12" height="1" fill="#ccccff"/><rect x="14" y="9" width="1" height="1" fill="#ffffff"/><rect x="15" y="9" width="1" height="1" fill="#000000"/><rect x="0" y="10" width="1" height="1" fill="#000000"/><rect x="1" y="10" width="1" height="1" fill="#ffffff"/><rect x="2" y="10" width="12" height="1" fill="#ccccff"/><rect x="14" y="10" width="1" height="1" fill="#ffffff"/><rect x="15" y="10" width="1" height="1" fill="#000000"/><rect x="0" y="11" width="1" height="1" fill="#000000"/><rect x="1" y="11" width="1" height="1" fill="#ffffff"/><rect x="2" y="11" width="12" height="1" fill="#ccccff"/><rect x="14" y="11" width="1" height="1" fill="#ffffff"/><rect x="15" y="11" width="1" height="1" fill="#000000"/><rect x="0" y="12" width="16" height="1" fill="#000000"/></svg>
<div class="" style="left:35px;top:486.84px;font-size:12px;line-height:12px;font-weight:normal;color:#000;white-space:pre;letter-spacing:0.35px">JAIColour</div>
<svg style="position:absolute;left:12px;top:503px" width="18" height="13" shape-rendering="crispEdges"><rect x="12" y="0" width="6" height="1" fill="#6666aa"/><rect x="11" y="1" width="7" height="1" fill="#6666aa"/><rect x="3" y="2" width="15" height="1" fill="#000000"/><rect x="3" y="3" width="1" height="1" fill="#000000"/><rect x="4" y="3" width="13" height="1" fill="#ffffff"/><rect x="17" y="3" width="1" height="1" fill="#000000"/><rect x="3" y="4" width="1" height="1" fill="#000000"/><rect x="4" y="4" width="1" height="1" fill="#ffffff"/><rect x="5" y="4" width="12" height="1" fill="#ccccff"/><rect x="17" y="4" width="1" height="1" fill="#000000"/><rect x="3" y="5" width="1" height="1" fill="#000000"/><rect x="4" y="5" width="1" height="1" fill="#ffffff"/><rect x="5" y="5" width="12" height="1" fill="#ccccff"/><rect x="17" y="5" width="1" height="1" fill="#000000"/><rect x="0" y="6" width="15" height="1" fill="#000000"/><rect x="15" y="6" width="2" height="1" fill="#ccccff"/><rect x="17" y="6" width="1" height="1" fill="#000000"/><rect x="0" y="7" width="1" height="1" fill="#000000"/><rect x="1" y="7" width="13" height="1" fill="#9999cc"/><rect x="14" y="7" width="1" height="1" fill="#000000"/><rect x="15" y="7" width="2" height="1" fill="#ccccff"/><rect x="17" y="7" width="1" height="1" fill="#000000"/><rect x="0" y="8" width="1" height="1" fill="#000000"/><rect x="1" y="8" width="14" height="1" fill="#9999cc"/><rect x="15" y="8" width="1" height="1" fill="#000000"/><rect x="16" y="8" width="1" height="1" fill="#ccccff"/><rect x="17" y="8" width="1" height="1" fill="#000000"/><rect x="1" y="9" width="1" height="1" fill="#000000"/><rect x="2" y="9" width="13" height="1" fill="#9999cc"/><rect x="15" y="9" width="1" height="1" fill="#000000"/><rect x="16" y="9" width="1" height="1" fill="#ccccff"/><rect x="17" y="9" width="1" height="1" fill="#000000"/><rect x="1" y="10" width="1" height="1" fill="#000000"/><rect x="2" y="10" width="14" height="1" fill="#9999cc"/><rect x="16" y="10" width="2" height="1" fill="#000000"/><rect x="2" y="11" width="1" height="1" fill="#000000"/><rect x="3" y="11" width="13" height="1" fill="#9999cc"/><rect x="16" y="11" width="2" height="1" fill="#000000"/><rect x="2" y="12" width="16" height="1" fill="#000000"/></svg>
<div class="" style="left:35px;top:503.84px;font-size:12px;line-height:12px;font-weight:normal;color:#000;white-space:pre;letter-spacing:0.35px">Tina</div>
<svg style="position:absolute;left:32px;top:520px" width="18" height="13" shape-rendering="crispEdges"><rect x="12" y="0" width="6" height="1" fill="#6666aa"/><rect x="11" y="1" width="7" height="1" fill="#6666aa"/><rect x="3" y="2" width="15" height="1" fill="#000000"/><rect x="3" y="3" width="1" height="1" fill="#000000"/><rect x="4" y="3" width="13" height="1" fill="#ffffff"/><rect x="17" y="3" width="1" height="1" fill="#000000"/><rect x="3" y="4" width="1" height="1" fill="#000000"/><rect x="4" y="4" width="1" height="1" fill="#ffffff"/><rect x="5" y="4" width="12" height="1" fill="#ccccff"/><rect x="17" y="4" width="1" height="1" fill="#000000"/><rect x="3" y="5" width="1" height="1" fill="#000000"/><rect x="4" y="5" width="1" height="1" fill="#ffffff"/><rect x="5" y="5" width="12" height="1" fill="#ccccff"/><rect x="17" y="5" width="1" height="1" fill="#000000"/><rect x="0" y="6" width="15" height="1" fill="#000000"/><rect x="15" y="6" width="2" height="1" fill="#ccccff"/><rect x="17" y="6" width="1" height="1" fill="#000000"/><rect x="0" y="7" width="1" height="1" fill="#000000"/><rect x="1" y="7" width="13" height="1" fill="#9999cc"/><rect x="14" y="7" width="1" height="1" fill="#000000"/><rect x="15" y="7" width="2" height="1" fill="#ccccff"/><rect x="17" y="7" width="1" height="1" fill="#000000"/><rect x="0" y="8" width="1" height="1" fill="#000000"/><rect x="1" y="8" width="14" height="1" fill="#9999cc"/><rect x="15" y="8" width="1" height="1" fill="#000000"/><rect x="16" y="8" width="1" height="1" fill="#ccccff"/><rect x="17" y="8" width="1" height="1" fill="#000000"/><rect x="1" y="9" width="1" height="1" fill="#000000"/><rect x="2" y="9" width="13" height="1" fill="#9999cc"/><rect x="15" y="9" width="1" height="1" fill="#000000"/><rect x="16" y="9" width="1" height="1" fill="#ccccff"/><rect x="17" y="9" width="1" height="1" fill="#000000"/><rect x="1" y="10" width="1" height="1" fill="#000000"/><rect x="2" y="10" width="14" height="1" fill="#9999cc"/><rect x="16" y="10" width="2" height="1" fill="#000000"/><rect x="2" y="11" width="1" height="1" fill="#000000"/><rect x="3" y="11" width="13" height="1" fill="#9999cc"/><rect x="16" y="11" width="2" height="1" fill="#000000"/><rect x="2" y="12" width="16" height="1" fill="#000000"/></svg>
<svg style="position:absolute;left:15px;top:522px" width="8" height="12" shape-rendering="crispEdges"><rect x="2" y="0" width="4" height="1" fill="#000000"/><rect x="1" y="1" width="1" height="1" fill="#000000"/><rect x="2" y="1" width="1" height="1" fill="#9999cc"/><rect x="3" y="1" width="2" height="1" fill="#ccccff"/><rect x="5" y="1" width="1" height="1" fill="#9999cc"/><rect x="6" y="1" width="1" height="1" fill="#000000"/><rect x="0" y="2" width="1" height="1" fill="#000000"/><rect x="1" y="2" width="1" height="1" fill="#9999cc"/><rect x="2" y="2" width="1" height="1" fill="#ccccff"/><rect x="3" y="2" width="2" height="1" fill="#ffffff"/><rect x="5" y="2" width="1" height="1" fill="#ccccff"/><rect x="6" y="2" width="1" height="1" fill="#9999cc"/><rect x="7" y="2" width="1" height="1" fill="#000000"/><rect x="0" y="3" width="1" height="1" fill="#000000"/><rect x="1" y="3" width="1" height="1" fill="#ccccff"/><rect x="2" y="3" width="1" height="1" fill="#ffffff"/><rect x="3" y="3" width="2" height="1" fill="#000000"/><rect x="5" y="3" width="1" height="1" fill="#ffffff"/><rect x="6" y="3" width="1" height="1" fill="#ccccff"/><rect x="7" y="3" width="1" height="1" fill="#000000"/><rect x="0" y="4" width="1" height="1" fill="#000000"/><rect x="1" y="4" width="1" height="1" fill="#ccccff"/><rect x="2" y="4" width="1" height="1" fill="#ffffff"/><rect x="3" y="4" width="2" height="1" fill="#000000"/><rect x="5" y="4" width="1" height="1" fill="#ffffff"/><rect x="6" y="4" width="1" height="1" fill="#ccccff"/><rect x="7" y="4" width="1" height="1" fill="#000000"/><rect x="0" y="5" width="1" height="1" fill="#000000"/><rect x="1" y="5" width="1" height="1" fill="#9999cc"/><rect x="2" y="5" width="1" height="1" fill="#ccccff"/><rect x="3" y="5" width="2" height="1" fill="#ffffff"/><rect x="5" y="5" width="1" height="1" fill="#ccccff"/><rect x="6" y="5" width="1" height="1" fill="#9999cc"/><rect x="7" y="5" width="1" height="1" fill="#000000"/><rect x="1" y="6" width="1" height="1" fill="#000000"/><rect x="2" y="6" width="1" height="1" fill="#9999cc"/><rect x="3" y="6" width="2" height="1" fill="#ccccff"/><rect x="5" y="6" width="1" height="1" fill="#9999cc"/><rect x="6" y="6" width="1" height="1" fill="#000000"/><rect x="2" y="7" width="4" height="1" fill="#000000"/><rect x="3" y="8" width="2" height="1" fill="#000000"/><rect x="3" y="9" width="2" height="1" fill="#000000"/><rect x="3" y="10" width="2" height="1" fill="#000000"/><rect x="3" y="11" width="2" height="1" fill="#000000"/></svg>
<div class="" style="left:55px;top:520.84px;font-size:12px;line-height:12px;font-weight:normal;color:#000;white-space:pre;letter-spacing:0.35px">Data</div>
<svg style="position:absolute;left:52px;top:537px" width="18" height="13" shape-rendering="crispEdges"><rect x="12" y="0" width="6" height="1" fill="#6666aa"/><rect x="11" y="1" width="7" height="1" fill="#6666aa"/><rect x="3" y="2" width="15" height="1" fill="#000000"/><rect x="3" y="3" width="1" height="1" fill="#000000"/><rect x="4" y="3" width="13" height="1" fill="#ffffff"/><rect x="17" y="3" width="1" height="1" fill="#000000"/><rect x="3" y="4" width="1" height="1" fill="#000000"/><rect x="4" y="4" width="1" height="1" fill="#ffffff"/><rect x="5" y="4" width="12" height="1" fill="#ccccff"/><rect x="17" y="4" width="1" height="1" fill="#000000"/><rect x="3" y="5" width="1" height="1" fill="#000000"/><rect x="4" y="5" width="1" height="1" fill="#ffffff"/><rect x="5" y="5" width="12" height="1" fill="#ccccff"/><rect x="17" y="5" width="1" height="1" fill="#000000"/><rect x="0" y="6" width="15" height="1" fill="#000000"/><rect x="15" y="6" width="2" height="1" fill="#ccccff"/><rect x="17" y="6" width="1" height="1" fill="#000000"/><rect x="0" y="7" width="1" height="1" fill="#000000"/><rect x="1" y="7" width="13" height="1" fill="#9999cc"/><rect x="14" y="7" width="1" height="1" fill="#000000"/><rect x="15" y="7" width="2" height="1" fill="#ccccff"/><rect x="17" y="7" width="1" height="1" fill="#000000"/><rect x="0" y="8" width="1" height="1" fill="#000000"/><rect x="1" y="8" width="14" height="1" fill="#9999cc"/><rect x="15" y="8" width="1" height="1" fill="#000000"/><rect x="16" y="8" width="1" height="1" fill="#ccccff"/><rect x="17" y="8" width="1" height="1" fill="#000000"/><rect x="1" y="9" width="1" height="1" fill="#000000"/><rect x="2" y="9" width="13" height="1" fill="#9999cc"/><rect x="15" y="9" width="1" height="1" fill="#000000"/><rect x="16" y="9" width="1" height="1" fill="#ccccff"/><rect x="17" y="9" width="1" height="1" fill="#000000"/><rect x="1" y="10" width="1" height="1" fill="#000000"/><rect x="2" y="10" width="14" height="1" fill="#9999cc"/><rect x="16" y="10" width="2" height="1" fill="#000000"/><rect x="2" y="11" width="1" height="1" fill="#000000"/><rect x="3" y="11" width="13" height="1" fill="#9999cc"/><rect x="16" y="11" width="2" height="1" fill="#000000"/><rect x="2" y="12" width="16" height="1" fill="#000000"/></svg>
<svg style="position:absolute;left:35px;top:539px" width="8" height="12" shape-rendering="crispEdges"><rect x="2" y="0" width="4" height="1" fill="#000000"/><rect x="1" y="1" width="1" height="1" fill="#000000"/><rect x="2" y="1" width="1" height="1" fill="#9999cc"/><rect x="3" y="1" width="2" height="1" fill="#ccccff"/><rect x="5" y="1" width="1" height="1" fill="#9999cc"/><rect x="6" y="1" width="1" height="1" fill="#000000"/><rect x="0" y="2" width="1" height="1" fill="#000000"/><rect x="1" y="2" width="1" height="1" fill="#9999cc"/><rect x="2" y="2" width="1" height="1" fill="#ccccff"/><rect x="3" y="2" width="2" height="1" fill="#ffffff"/><rect x="5" y="2" width="1" height="1" fill="#ccccff"/><rect x="6" y="2" width="1" height="1" fill="#9999cc"/><rect x="7" y="2" width="1" height="1" fill="#000000"/><rect x="0" y="3" width="1" height="1" fill="#000000"/><rect x="1" y="3" width="1" height="1" fill="#ccccff"/><rect x="2" y="3" width="1" height="1" fill="#ffffff"/><rect x="3" y="3" width="2" height="1" fill="#000000"/><rect x="5" y="3" width="1" height="1" fill="#ffffff"/><rect x="6" y="3" width="1" height="1" fill="#ccccff"/><rect x="7" y="3" width="1" height="1" fill="#000000"/><rect x="0" y="4" width="1" height="1" fill="#000000"/><rect x="1" y="4" width="1" height="1" fill="#ccccff"/><rect x="2" y="4" width="1" height="1" fill="#ffffff"/><rect x="3" y="4" width="2" height="1" fill="#000000"/><rect x="5" y="4" width="1" height="1" fill="#ffffff"/><rect x="6" y="4" width="1" height="1" fill="#ccccff"/><rect x="7" y="4" width="1" height="1" fill="#000000"/><rect x="0" y="5" width="1" height="1" fill="#000000"/><rect x="1" y="5" width="1" height="1" fill="#9999cc"/><rect x="2" y="5" width="1" height="1" fill="#ccccff"/><rect x="3" y="5" width="2" height="1" fill="#ffffff"/><rect x="5" y="5" width="1" height="1" fill="#ccccff"/><rect x="6" y="5" width="1" height="1" fill="#9999cc"/><rect x="7" y="5" width="1" height="1" fill="#000000"/><rect x="1" y="6" width="1" height="1" fill="#000000"/><rect x="2" y="6" width="1" height="1" fill="#9999cc"/><rect x="3" y="6" width="2" height="1" fill="#ccccff"/><rect x="5" y="6" width="1" height="1" fill="#9999cc"/><rect x="6" y="6" width="1" height="1" fill="#000000"/><rect x="2" y="7" width="4" height="1" fill="#000000"/><rect x="3" y="8" width="2" height="1" fill="#000000"/><rect x="3" y="9" width="2" height="1" fill="#000000"/><rect x="3" y="10" width="2" height="1" fill="#000000"/><rect x="3" y="11" width="2" height="1" fill="#000000"/></svg>
<div style="left:75px;top:536px;width:26px;height:16px;background:#ccccff;"></div>
<div class="" style="left:75px;top:537.84px;font-size:12px;line-height:12px;font-weight:normal;color:#000;white-space:pre;letter-spacing:0.35px">Input</div>
<svg style="position:absolute;left:71px;top:553px" width="13" height="16" shape-rendering="crispEdges"><rect x="0" y="0" width="10" height="1" fill="#000000"/><rect x="0" y="1" width="1" height="1" fill="#000000"/><rect x="1" y="1" width="1" height="1" fill="#ccccff"/><rect x="2" y="1" width="7" height="1" fill="#ffffff"/><rect x="9" y="1" width="2" height="1" fill="#000000"/><rect x="0" y="2" width="1" height="1" fill="#000000"/><rect x="1" y="2" width="1" height="1" fill="#ccccff"/><rect x="2" y="2" width="6" height="1" fill="#ffffff"/><rect x="8" y="2" width="1" height="1" fill="#000000"/><rect x="9" y="2" width="1" height="1" fill="#ccccff"/><rect x="10" y="2" width="2" height="1" fill="#000000"/><rect x="0" y="3" width="1" height="1" fill="#000000"/><rect x="1" y="3" width="1" height="1" fill="#ccccff"/><rect x="2" y="3" width="7" height="1" fill="#ffffff"/><rect x="9" y="3" width="1" height="1" fill="#000000"/><rect x="10" y="3" width="1" height="1" fill="#ccccff"/><rect x="11" y="3" width="1" height="1" fill="#000000"/><rect x="0" y="4" width="1" height="1" fill="#000000"/><rect x="1" y="4" width="1" height="1" fill="#ccccff"/><rect x="2" y="4" width="8" height="1" fill="#ffffff"/><rect x="10" y="4" width="3" height="1" fill="#000000"/><rect x="0" y="5" width="1" height="1" fill="#000000"/><rect x="1" y="5" width="1" height="1" fill="#ccccff"/><rect x="2" y="5" width="9" height="1" fill="#ffffff"/><rect x="11" y="5" width="1" height="1" fill="#ccccff"/><rect x="12" y="5" width="1" height="1" fill="#000000"/><rect x="0" y="6" width="1" height="1" fill="#000000"/><rect x="1" y="6" width="1" height="1" fill="#ccccff"/><rect x="2" y="6" width="9" height="1" fill="#ffffff"/><rect x="11" y="6" width="1" height="1" fill="#ccccff"/><rect x="12" y="6" width="1" height="1" fill="#000000"/><rect x="0" y="7" width="1" height="1" fill="#000000"/><rect x="1" y="7" width="1" height="1" fill="#ccccff"/><rect x="2" y="7" width="9" height="1" fill="#ffffff"/><rect x="11" y="7" width="1" height="1" fill="#ccccff"/><rect x="12" y="7" width="1" height="1" fill="#000000"/><rect x="0" y="8" width="1" height="1" fill="#000000"/><rect x="1" y="8" width="1" height="1" fill="#ccccff"/><rect x="2" y="8" width="9" height="1" fill="#ffffff"/><rect x="11" y="8" width="1" height="1" fill="#ccccff"/><rect x="12" y="8" width="1" height="1" fill="#000000"/><rect x="0" y="9" width="1" height="1" fill="#000000"/><rect x="1" y="9" width="1" height="1" fill="#ccccff"/><rect x="2" y="9" width="9" height="1" fill="#ffffff"/><rect x="11" y="9" width="1" height="1" fill="#ccccff"/><rect x="12" y="9" width="1" height="1" fill="#000000"/><rect x="0" y="10" width="1" height="1" fill="#000000"/><rect x="1" y="10" width="1" height="1" fill="#ccccff"/><rect x="2" y="10" width="9" height="1" fill="#ffffff"/><rect x="11" y="10" width="1" height="1" fill="#ccccff"/><rect x="12" y="10" width="1" height="1" fill="#000000"/><rect x="0" y="11" width="1" height="1" fill="#000000"/><rect x="1" y="11" width="1" height="1" fill="#ccccff"/><rect x="2" y="11" width="9" height="1" fill="#ffffff"/><rect x="11" y="11" width="1" height="1" fill="#ccccff"/><rect x="12" y="11" width="1" height="1" fill="#000000"/><rect x="0" y="12" width="1" height="1" fill="#000000"/><rect x="1" y="12" width="1" height="1" fill="#ccccff"/><rect x="2" y="12" width="9" height="1" fill="#ffffff"/><rect x="11" y="12" width="1" height="1" fill="#ccccff"/><rect x="12" y="12" width="1" height="1" fill="#000000"/><rect x="0" y="13" width="1" height="1" fill="#000000"/><rect x="1" y="13" width="1" height="1" fill="#ccccff"/><rect x="2" y="13" width="9" height="1" fill="#ffffff"/><rect x="11" y="13" width="1" height="1" fill="#ccccff"/><rect x="12" y="13" width="1" height="1" fill="#000000"/><rect x="0" y="14" width="1" height="1" fill="#000000"/><rect x="1" y="14" width="11" height="1" fill="#ccccff"/><rect x="12" y="14" width="1" height="1" fill="#000000"/><rect x="0" y="15" width="13" height="1" fill="#000000"/></svg>
<div class="" style="left:88px;top:554.84px;font-size:12px;line-height:12px;font-weight:normal;color:#000;white-space:pre;letter-spacing:0.35px">TinaImageReader</div>
<svg style="position:absolute;left:54px;top:571px" width="16" height="13" shape-rendering="crispEdges"><rect x="10" y="0" width="6" height="1" fill="#6666aa"/><rect x="9" y="1" width="7" height="1" fill="#6666aa"/><rect x="0" y="2" width="16" height="1" fill="#000000"/><rect x="0" y="3" width="1" height="1" fill="#000000"/><rect x="1" y="3" width="14" height="1" fill="#ffffff"/><rect x="15" y="3" width="1" height="1" fill="#000000"/><rect x="0" y="4" width="1" height="1" fill="#000000"/><rect x="1" y="4" width="1" height="1" fill="#ffffff"/><rect x="2" y="4" width="12" height="1" fill="#ccccff"/><rect x="14" y="4" width="1" height="1" fill="#ffffff"/><rect x="15" y="4" width="1" height="1" fill="#000000"/><rect x="0" y="5" width="1" height="1" fill="#000000"/><rect x="1" y="5" width="1" height="1" fill="#ffffff"/><rect x="2" y="5" width="12" height="1" fill="#ccccff"/><rect x="14" y="5" width="1" height="1" fill="#ffffff"/><rect x="15" y="5" width="1" height="1" fill="#000000"/><rect x="0" y="6" width="1" height="1" fill="#000000"/><rect x="1" y="6" width="1" height="1" fill="#ffffff"/><rect x="2" y="6" width="12" height="1" fill="#ccccff"/><rect x="14" y="6" width="1" height="1" fill="#ffffff"/><rect x="15" y="6" width="1" height="1" fill="#000000"/><rect x="0" y="7" width="1" height="1" fill="#000000"/><rect x="1" y="7" width="1" height="1" fill="#ffffff"/><rect x="2" y="7" width="12" height="1" fill="#ccccff"/><rect x="14" y="7" width="1" height="1" fill="#ffffff"/><rect x="15" y="7" width="1" height="1" fill="#000000"/><rect x="0" y="8" width="1" height="1" fill="#000000"/><rect x="1" y="8" width="1" height="1" fill="#ffffff"/><rect x="2" y="8" width="12" height="1" fill="#ccccff"/><rect x="14" y="8" width="1" height="1" fill="#ffffff"/><rect x="15" y="8" width="1" height="1" fill="#000000"/><rect x="0" y="9" width="1" height="1" fill="#000000"/><rect x="1" y="9" width="1" height="1" fill="#ffffff"/><rect x="2" y="9" width="12" height="1" fill="#ccccff"/><rect x="14" y="9" width="1" height="1" fill="#ffffff"/><rect x="15" y="9" width="1" height="1" fill="#000000"/><rect x="0" y="10" width="1" height="1" fill="#000000"/><rect x="1" y="10" width="1" height="1" fill="#ffffff"/><rect x="2" y="10" width="12" height="1" fill="#ccccff"/><rect x="14" y="10" width="1" height="1" fill="#ffffff"/><rect x="15" y="10" width="1" height="1" fill="#000000"/><rect x="0" y="11" width="1" height="1" fill="#000000"/><rect x="1" y="11" width="1" height="1" fill="#ffffff"/><rect x="2" y="11" width="12" height="1" fill="#ccccff"/><rect x="14" y="11" width="1" height="1" fill="#ffffff"/><rect x="15" y="11" width="1" height="1" fill="#000000"/><rect x="0" y="12" width="16" height="1" fill="#000000"/></svg>
<div class="" style="left:75px;top:571.84px;font-size:12px;line-height:12px;font-weight:normal;color:#000;white-space:pre;letter-spacing:0.35px">Output</div>
<svg style="position:absolute;left:32px;top:588px" width="18" height="13" shape-rendering="crispEdges"><rect x="12" y="0" width="6" height="1" fill="#6666aa"/><rect x="11" y="1" width="7" height="1" fill="#6666aa"/><rect x="3" y="2" width="15" height="1" fill="#000000"/><rect x="3" y="3" width="1" height="1" fill="#000000"/><rect x="4" y="3" width="13" height="1" fill="#ffffff"/><rect x="17" y="3" width="1" height="1" fill="#000000"/><rect x="3" y="4" width="1" height="1" fill="#000000"/><rect x="4" y="4" width="1" height="1" fill="#ffffff"/><rect x="5" y="4" width="12" height="1" fill="#ccccff"/><rect x="17" y="4" width="1" height="1" fill="#000000"/><rect x="3" y="5" width="1" height="1" fill="#000000"/><rect x="4" y="5" width="1" height="1" fill="#ffffff"/><rect x="5" y="5" width="12" height="1" fill="#ccccff"/><rect x="17" y="5" width="1" height="1" fill="#000000"/><rect x="0" y="6" width="15" height="1" fill="#000000"/><rect x="15" y="6" width="2" height="1" fill="#ccccff"/><rect x="17" y="6" width="1" height="1" fill="#000000"/><rect x="0" y="7" width="1" height="1" fill="#000000"/><rect x="1" y="7" width="13" height="1" fill="#9999cc"/><rect x="14" y="7" width="1" height="1" fill="#000000"/><rect x="15" y="7" width="2" height="1" fill="#ccccff"/><rect x="17" y="7" width="1" height="1" fill="#000000"/><rect x="0" y="8" width="1" height="1" fill="#000000"/><rect x="1" y="8" width="14" height="1" fill="#9999cc"/><rect x="15" y="8" width="1" height="1" fill="#000000"/><rect x="16" y="8" width="1" height="1" fill="#ccccff"/><rect x="17" y="8" width="1" height="1" fill="#000000"/><rect x="1" y="9" width="1" height="1" fill="#000000"/><rect x="2" y="9" width="13" height="1" fill="#9999cc"/><rect x="15" y="9" width="1" height="1" fill="#000000"/><rect x="16" y="9" width="1" height="1" fill="#ccccff"/><rect x="17" y="9" width="1" height="1" fill="#000000"/><rect x="1" y="10" width="1" height="1" fill="#000000"/><rect x="2" y="10" width="14" height="1" fill="#9999cc"/><rect x="16" y="10" width="2" height="1" fill="#000000"/><rect x="2" y="11" width="1" height="1" fill="#000000"/><rect x="3" y="11" width="13" height="1" fill="#9999cc"/><rect x="16" y="11" width="2" height="1" fill="#000000"/><rect x="2" y="12" width="16" height="1" fill="#000000"/></svg>
<svg style="position:absolute;left:15px;top:590px" width="8" height="12" shape-rendering="crispEdges"><rect x="2" y="0" width="4" height="1" fill="#000000"/><rect x="1" y="1" width="1" height="1" fill="#000000"/><rect x="2" y="1" width="1" height="1" fill="#9999cc"/><rect x="3" y="1" width="2" height="1" fill="#ccccff"/><rect x="5" y="1" width="1" height="1" fill="#9999cc"/><rect x="6" y="1" width="1" height="1" fill="#000000"/><rect x="0" y="2" width="1" height="1" fill="#000000"/><rect x="1" y="2" width="1" height="1" fill="#9999cc"/><rect x="2" y="2" width="1" height="1" fill="#ccccff"/><rect x="3" y="2" width="2" height="1" fill="#ffffff"/><rect x="5" y="2" width="1" height="1" fill="#ccccff"/><rect x="6" y="2" width="1" height="1" fill="#9999cc"/><rect x="7" y="2" width="1" height="1" fill="#000000"/><rect x="0" y="3" width="1" height="1" fill="#000000"/><rect x="1" y="3" width="1" height="1" fill="#ccccff"/><rect x="2" y="3" width="1" height="1" fill="#ffffff"/><rect x="3" y="3" width="2" height="1" fill="#000000"/><rect x="5" y="3" width="1" height="1" fill="#ffffff"/><rect x="6" y="3" width="1" height="1" fill="#ccccff"/><rect x="7" y="3" width="1" height="1" fill="#000000"/><rect x="0" y="4" width="1" height="1" fill="#000000"/><rect x="1" y="4" width="1" height="1" fill="#ccccff"/><rect x="2" y="4" width="1" height="1" fill="#ffffff"/><rect x="3" y="4" width="2" height="1" fill="#000000"/><rect x="5" y="4" width="1" height="1" fill="#ffffff"/><rect x="6" y="4" width="1" height="1" fill="#ccccff"/><rect x="7" y="4" width="1" height="1" fill="#000000"/><rect x="0" y="5" width="1" height="1" fill="#000000"/><rect x="1" y="5" width="1" height="1" fill="#9999cc"/><rect x="2" y="5" width="1" height="1" fill="#ccccff"/><rect x="3" y="5" width="2" height="1" fill="#ffffff"/><rect x="5" y="5" width="1" height="1" fill="#ccccff"/><rect x="6" y="5" width="1" height="1" fill="#9999cc"/><rect x="7" y="5" width="1" height="1" fill="#000000"/><rect x="1" y="6" width="1" height="1" fill="#000000"/><rect x="2" y="6" width="1" height="1" fill="#9999cc"/><rect x="3" y="6" width="2" height="1" fill="#ccccff"/><rect x="5" y="6" width="1" height="1" fill="#9999cc"/><rect x="6" y="6" width="1" height="1" fill="#000000"/><rect x="2" y="7" width="4" height="1" fill="#000000"/><rect x="3" y="8" width="2" height="1" fill="#000000"/><rect x="3" y="9" width="2" height="1" fill="#000000"/><rect x="3" y="10" width="2" height="1" fill="#000000"/><rect x="3" y="11" width="2" height="1" fill="#000000"/></svg>
<div class="" style="left:55px;top:588.84px;font-size:12px;line-height:12px;font-weight:normal;color:#000;white-space:pre;letter-spacing:0.35px">Applications</div>
<svg style="position:absolute;left:51px;top:604px" width="13" height="16" shape-rendering="crispEdges"><rect x="0" y="0" width="10" height="1" fill="#000000"/><rect x="0" y="1" width="1" height="1" fill="#000000"/><rect x="1" y="1" width="1" height="1" fill="#ccccff"/><rect x="2" y="1" width="7" height="1" fill="#ffffff"/><rect x="9" y="1" width="2" height="1" fill="#000000"/><rect x="0" y="2" width="1" height="1" fill="#000000"/><rect x="1" y="2" width="1" height="1" fill="#ccccff"/><rect x="2" y="2" width="6" height="1" fill="#ffffff"/><rect x="8" y="2" width="1" height="1" fill="#000000"/><rect x="9" y="2" width="1" height="1" fill="#ccccff"/><rect x="10" y="2" width="2" height="1" fill="#000000"/><rect x="0" y="3" width="1" height="1" fill="#000000"/><rect x="1" y="3" width="1" height="1" fill="#ccccff"/><rect x="2" y="3" width="7" height="1" fill="#ffffff"/><rect x="9" y="3" width="1" height="1" fill="#000000"/><rect x="10" y="3" width="1" height="1" fill="#ccccff"/><rect x="11" y="3" width="1" height="1" fill="#000000"/><rect x="0" y="4" width="1" height="1" fill="#000000"/><rect x="1" y="4" width="1" height="1" fill="#ccccff"/><rect x="2" y="4" width="8" height="1" fill="#ffffff"/><rect x="10" y="4" width="3" height="1" fill="#000000"/><rect x="0" y="5" width="1" height="1" fill="#000000"/><rect x="1" y="5" width="1" height="1" fill="#ccccff"/><rect x="2" y="5" width="9" height="1" fill="#ffffff"/><rect x="11" y="5" width="1" height="1" fill="#ccccff"/><rect x="12" y="5" width="1" height="1" fill="#000000"/><rect x="0" y="6" width="1" height="1" fill="#000000"/><rect x="1" y="6" width="1" height="1" fill="#ccccff"/><rect x="2" y="6" width="9" height="1" fill="#ffffff"/><rect x="11" y="6" width="1" height="1" fill="#ccccff"/><rect x="12" y="6" width="1" height="1" fill="#000000"/><rect x="0" y="7" width="1" height="1" fill="#000000"/><rect x="1" y="7" width="1" height="1" fill="#ccccff"/><rect x="2" y="7" width="9" height="1" fill="#ffffff"/><rect x="11" y="7" width="1" height="1" fill="#ccccff"/><rect x="12" y="7" width="1" height="1" fill="#000000"/><rect x="0" y="8" width="1" height="1" fill="#000000"/><rect x="1" y="8" width="1" height="1" fill="#ccccff"/><rect x="2" y="8" width="9" height="1" fill="#ffffff"/><rect x="11" y="8" width="1" height="1" fill="#ccccff"/><rect x="12" y="8" width="1" height="1" fill="#000000"/><rect x="0" y="9" width="1" height="1" fill="#000000"/><rect x="1" y="9" width="1" height="1" fill="#ccccff"/><rect x="2" y="9" width="9" height="1" fill="#ffffff"/><rect x="11" y="9" width="1" height="1" fill="#ccccff"/><rect x="12" y="9" width="1" height="1" fill="#000000"/><rect x="0" y="10" width="1" height="1" fill="#000000"/><rect x="1" y="10" width="1" height="1" fill="#ccccff"/><rect x="2" y="10" width="9" height="1" fill="#ffffff"/><rect x="11" y="10" width="1" height="1" fill="#ccccff"/><rect x="12" y="10" width="1" height="1" fill="#000000"/><rect x="0" y="11" width="1" height="1" fill="#000000"/><rect x="1" y="11" width="1" height="1" fill="#ccccff"/><rect x="2" y="11" width="9" height="1" fill="#ffffff"/><rect x="11" y="11" width="1" height="1" fill="#ccccff"/><rect x="12" y="11" width="1" height="1" fill="#000000"/><rect x="0" y="12" width="1" height="1" fill="#000000"/><rect x="1" y="12" width="1" height="1" fill="#ccccff"/><rect x="2" y="12" width="9" height="1" fill="#ffffff"/><rect x="11" y="12" width="1" height="1" fill="#ccccff"/><rect x="12" y="12" width="1" height="1" fill="#000000"/><rect x="0" y="13" width="1" height="1" fill="#000000"/><rect x="1" y="13" width="1" height="1" fill="#ccccff"/><rect x="2" y="13" width="9" height="1" fill="#ffffff"/><rect x="11" y="13" width="1" height="1" fill="#ccccff"/><rect x="12" y="13" width="1" height="1" fill="#000000"/><rect x="0" y="14" width="1" height="1" fill="#000000"/><rect x="1" y="14" width="11" height="1" fill="#ccccff"/><rect x="12" y="14" width="1" height="1" fill="#000000"/><rect x="0" y="15" width="13" height="1" fill="#000000"/></svg>
<div class="" style="left:68px;top:605.84px;font-size:12px;line-height:12px;font-weight:normal;color:#000;white-space:pre;letter-spacing:0.35px">AortaTracker</div>
<div style="left:243px;top:86px;width:656px;height:626px;background:#9e9ed4;"></div>
<svg style="position:absolute;left:244px;top:87px" width="653" height="624" shape-rendering="crispEdges"><defs><pattern id="dk" x="2" y="1" width="3" height="2" patternUnits="userSpaceOnUse"><rect width="1" height="1" fill="#8e8ec4"/></pattern></defs><rect width="653" height="624" fill="url(#dk)"/></svg>
<div style="left:243px;top:86px;width:656px;height:1px;background:#666666;"></div>
<div style="left:243px;top:86px;width:1px;height:627px;background:#666666;"></div>
<div style="left:897px;top:87px;width:2px;height:626px;background:#ffffff;"></div>
<div style="left:244px;top:711px;width:655px;height:2px;background:#ffffff;"></div>
<div style="left:354px;top:91px;width:424px;height:296px;background:#6b6bab;border-radius:3px 3px 2px 2px"></div>
<div style="left:368px;top:93px;width:397px;height:1px;background:#000;"></div>
<div style="left:368px;top:94px;width:397px;height:1px;background:#a8a8e0;"></div>
<div style="left:368px;top:384px;width:397px;height:1px;background:#000;"></div>
<div style="left:368px;top:385px;width:397px;height:1px;background:#a8a8e0;"></div>
<div style="left:356px;top:105px;width:1px;height:269px;background:#000;"></div>
<div style="left:357px;top:105px;width:1px;height:269px;background:#a8a8e0;"></div>
<div style="left:775px;top:105px;width:1px;height:269px;background:#000;"></div>
<div style="left:776px;top:105px;width:1px;height:269px;background:#a8a8e0;"></div>
<div style="left:359px;top:96px;width:414px;height:23px;background:#ccccff;border-radius:2px 2px 0 0"></div>
<div style="left:359px;top:119px;width:414px;height:1px;background:#6b6bab;"></div>
<div style="left:359px;top:120px;width:414px;height:262px;background:#ffffff;"></div>
<div class="" style="left:384px;top:100.84px;font-size:12px;line-height:12px;font-weight:bold;color:#000;white-space:pre;letter-spacing:0.1px">Workspace - [tina_test.dat]</div>
<div style="left:756px;top:120px;width:17px;height:245px;background:#cccccc;"></div>
<div style="left:756px;top:120px;width:1px;height:245px;background:#666666;"></div>
<div style="left:772px;top:120px;width:1px;height:245px;background:#ffffff;"></div>
<div style="left:756px;top:120px;width:17px;height:16px;background:#cccccc;"></div>
<div style="left:756px;top:120px;width:17px;height:1px;background:#666666;"></div>
<div style="left:756px;top:120px;width:1px;height:16px;background:#666666;"></div>
<div style="left:756px;top:134px;width:17px;height:1px;background:#666666;"></div>
<div style="left:771px;top:120px;width:1px;height:16px;background:#666666;"></div>
<div style="left:757px;top:121px;width:14px;height:1px;background:#ffffff;"></div>
<div style="left:757px;top:121px;width:1px;height:13px;background:#ffffff;"></div>
<div style="left:756px;top:135px;width:17px;height:1px;background:#ffffff;"></div>
<div style="left:772px;top:120px;width:1px;height:16px;background:#ffffff;"></div>
<svg style="position:absolute;left:756px;top:120px" width="17" height="16"><path d="M4.0 10.5H13.0L8.5 6.0Z" fill="#000"/></svg>
<div style="left:756px;top:135px;width:16px;height:17px;background:#9999cc;"></div>
<div style="left:756px;top:135px;width:16px;height:1px;background:#6666aa;"></div>
<div style="left:756px;top:135px;width:1px;height:17px;background:#6666aa;"></div>
<div style="left:756px;top:151px;width:16px;height:1px;background:#6666aa;"></div>
<div style="left:771px;top:135px;width:1px;height:17px;background:#6666aa;"></div>
<div style="left:757px;top:136px;width:14px;height:1px;background:#ccccff;"></div>
<div style="left:757px;top:136px;width:1px;height:15px;background:#ccccff;"></div>
<svg style="position:absolute;left:758px;top:137px" width="13" height="14" shape-rendering="crispEdges"><defs><pattern id="tb1" width="4" height="4" patternUnits="userSpaceOnUse"><rect x="0" y="0" width="1" height="1" fill="#ccccff"/><rect x="2" y="2" width="1" height="1" fill="#ccccff"/><rect x="1" y="1" width="1" height="1" fill="#6666aa"/><rect x="3" y="3" width="1" height="1" fill="#6666aa"/></pattern></defs><rect width="13" height="14" fill="url(#tb1)"/></svg>
<div style="left:756px;top:348px;width:17px;height:17px;background:#cccccc;"></div>
<div style="left:756px;top:348px;width:17px;height:1px;background:#666666;"></div>
<div style="left:756px;top:348px;width:1px;height:17px;background:#666666;"></div>
<div style="left:756px;top:363px;width:17px;height:1px;background:#666666;"></div>
<div style="left:771px;top:348px;width:1px;height:17px;background:#666666;"></div>
<div style="left:757px;top:349px;width:14px;height:1px;background:#ffffff;"></div>
<div style="left:757px;top:349px;width:1px;height:14px;background:#ffffff;"></div>
<div style="left:756px;top:364px;width:17px;height:1px;background:#ffffff;"></div>
<div style="left:772px;top:348px;width:1px;height:17px;background:#ffffff;"></div>
<svg style="position:absolute;left:756px;top:348px" width="17" height="17"><path d="M4.0 6.0H13.0L8.5 10.5Z" fill="#000"/></svg>
<div style="left:359px;top:365px;width:397px;height:17px;background:#cccccc;"></div>
<div style="left:359px;top:365px;width:397px;height:1px;background:#666666;"></div>
<div style="left:359px;top:381px;width:397px;height:1px;background:#ffffff;"></div>
<div style="left:359px;top:365px;width:15px;height:17px;background:#cccccc;"></div>
<div style="left:359px;top:365px;width:15px;height:1px;background:#666666;"></div>
<div style="left:359px;top:365px;width:1px;height:17px;background:#666666;"></div>
<div style="left:359px;top:380px;width:15px;height:1px;background:#666666;"></div>
<div style="left:372px;top:365px;width:1px;height:17px;background:#666666;"></div>
<div style="left:360px;top:366px;width:12px;height:1px;background:#ffffff;"></div>
<div style="left:360px;top:366px;width:1px;height:14px;background:#ffffff;"></div>
<div style="left:359px;top:381px;width:15px;height:1px;background:#ffffff;"></div>
<div style="left:373px;top:365px;width:1px;height:17px;background:#ffffff;"></div>
<svg style="position:absolute;left:359px;top:365px" width="15" height="17"><path d="M10.0 4.0V13.0L5.5 8.5Z" fill="#000"/></svg>
<div style="left:374px;top:365px;width:17px;height:17px;background:#9999cc;"></div>
<div style="left:374px;top:365px;width:17px;height:1px;background:#6666aa;"></div>
<div style="left:374px;top:365px;width:1px;height:17px;background:#6666aa;"></div>
<div style="left:374px;top:381px;width:17px;height:1px;background:#6666aa;"></div>
<div style="left:390px;top:365px;width:1px;height:17px;background:#6666aa;"></div>
<div style="left:375px;top:366px;width:15px;height:1px;background:#ccccff;"></div>
<div style="left:375px;top:366px;width:1px;height:15px;background:#ccccff;"></div>
<svg style="position:absolute;left:376px;top:367px" width="14" height="14" shape-rendering="crispEdges"><defs><pattern id="tb2" width="4" height="4" patternUnits="userSpaceOnUse"><rect x="0" y="0" width="1" height="1" fill="#ccccff"/><rect x="2" y="2" width="1" height="1" fill="#ccccff"/><rect x="1" y="1" width="1" height="1" fill="#6666aa"/><rect x="3" y="3" width="1" height="1" fill="#6666aa"/></pattern></defs><rect width="14" height="14" fill="url(#tb2)"/></svg>
<div style="left:740px;top:365px;width:16px;height:17px;background:#cccccc;"></div>
<div style="left:740px;top:365px;width:16px;height:1px;background:#666666;"></div>
<div style="left:740px;top:365px;width:1px;height:17px;background:#666666;"></div>
<div style="left:740px;top:380px;width:16px;height:1px;background:#666666;"></div>
<div style="left:754px;top:365px;width:1px;height:17px;background:#666666;"></div>
<div style="left:741px;top:366px;width:13px;height:1px;background:#ffffff;"></div>
<div style="left:741px;top:366px;width:1px;height:14px;background:#ffffff;"></div>
<div style="left:740px;top:381px;width:16px;height:1px;background:#ffffff;"></div>
<div style="left:755px;top:365px;width:1px;height:17px;background:#ffffff;"></div>
<svg style="position:absolute;left:740px;top:365px" width="16" height="17"><path d="M5.5 4.0V13.0L10.0 8.5Z" fill="#000"/></svg>
<div style="left:756px;top:365px;width:17px;height:17px;background:#9e9ed4;"></div>
<div style="left:282px;top:393px;width:283px;height:307px;background:#6e6e6e;border-radius:3px 3px 2px 2px"></div>
<div style="left:296px;top:395px;width:256px;height:1px;background:#000;"></div>
<div style="left:296px;top:396px;width:256px;height:1px;background:#a0a0a0;"></div>
<div style="left:296px;top:697px;width:256px;height:1px;background:#000;"></div>
<div style="left:296px;top:698px;width:256px;height:1px;background:#a0a0a0;"></div>
<div style="left:284px;top:407px;width:1px;height:280px;background:#000;"></div>
<div style="left:285px;top:407px;width:1px;height:280px;background:#a0a0a0;"></div>
<div style="left:562px;top:407px;width:1px;height:280px;background:#000;"></div>
<div style="left:563px;top:407px;width:1px;height:280px;background:#a0a0a0;"></div>
<div style="left:287px;top:398px;width:273px;height:23px;background:#d6d6d6;border-radius:2px 2px 0 0"></div>
<div style="left:287px;top:421px;width:273px;height:1px;background:#999999;"></div>
<div style="left:287px;top:422px;width:273px;height:273px;background:#000;"></div>
<div class="" style="left:312px;top:402.84px;font-size:12px;line-height:12px;font-weight:bold;color:#000;white-space:pre;">Image Viewer</div>
<div style="left:543px;top:422px;width:17px;height:256px;background:#d8d8d8;"></div>
<div style="left:543px;top:422px;width:17px;height:16px;background:#dedede;"></div>
<svg style="position:absolute;left:543px;top:422px" width="17" height="16"><path d="M4.0 10.5H13.0L8.5 6.0Z" fill="#999999"/></svg>
<div style="left:543px;top:661px;width:17px;height:1px;background:#aaaaaa;"></div>
<div style="left:543px;top:662px;width:17px;height:16px;background:#dedede;"></div>
<svg style="position:absolute;left:543px;top:662px" width="17" height="16"><path d="M4.0 5.5H13.0L8.5 10.0Z" fill="#999999"/></svg>
<div style="left:287px;top:678px;width:256px;height:17px;background:#d8d8d8;"></div>
<div style="left:287px;top:678px;width:16px;height:17px;background:#dedede;"></div>
<svg style="position:absolute;left:287px;top:678px" width="16" height="17"><path d="M10.5 4.0V13.0L6.0 8.5Z" fill="#999999"/></svg>
<div style="left:526px;top:678px;width:17px;height:17px;background:#dedede;"></div>
<svg style="position:absolute;left:526px;top:678px" width="17" height="17"><path d="M6.0 4.0V13.0L10.5 8.5Z" fill="#999999"/></svg>
<div style="left:543px;top:678px;width:17px;height:17px;background:#9e9ed4;"></div>
<div style="left:574px;top:393px;width:284px;height:307px;background:#6e6e6e;border-radius:3px 3px 2px 2px"></div>
<div style="left:588px;top:395px;width:257px;height:1px;background:#000;"></div>
<div style="left:588px;top:396px;width:257px;height:1px;background:#a0a0a0;"></div>
<div style="left:588px;top:697px;width:257px;height:1px;background:#000;"></div>
<div style="left:588px;top:698px;width:257px;height:1px;background:#a0a0a0;"></div>
<div style="left:576px;top:407px;width:1px;height:280px;background:#000;"></div>
<div style="left:577px;top:407px;width:1px;height:280px;background:#a0a0a0;"></div>
<div style="left:855px;top:407px;width:1px;height:280px;background:#000;"></div>
<div style="left:856px;top:407px;width:1px;height:280px;background:#a0a0a0;"></div>
<div style="left:579px;top:398px;width:274px;height:23px;background:#d6d6d6;border-radius:2px 2px 0 0"></div>
<div style="left:579px;top:421px;width:274px;height:1px;background:#999999;"></div>
<div style="left:579px;top:422px;width:274px;height:273px;background:#000;"></div>
<div class="" style="left:604px;top:402.84px;font-size:12px;line-height:12px;font-weight:bold;color:#000;white-space:pre;">Image Viewer</div>
<div style="left:836px;top:422px;width:17px;height:256px;background:#d8d8d8;"></div>
<div style="left:836px;top:422px;width:17px;height:16px;background:#dedede;"></div>
<svg style="position:absolute;left:836px;top:422px" width="17" height="16"><path d="M4.0 10.5H13.0L8.5 6.0Z" fill="#999999"/></svg>
<div style="left:836px;top:661px;width:17px;height:1px;background:#aaaaaa;"></div>
<div style="left:836px;top:662px;width:17px;height:16px;background:#dedede;"></div>
<svg style="position:absolute;left:836px;top:662px" width="17" height="16"><path d="M4.0 5.5H13.0L8.5 10.0Z" fill="#999999"/></svg>
<div style="left:579px;top:678px;width:257px;height:17px;background:#d8d8d8;"></div>
<div style="left:579px;top:678px;width:16px;height:17px;background:#dedede;"></div>
<svg style="position:absolute;left:579px;top:678px" width="16" height="17"><path d="M10.5 4.0V13.0L6.0 8.5Z" fill="#999999"/></svg>
<div style="left:819px;top:678px;width:17px;height:17px;background:#dedede;"></div>
<svg style="position:absolute;left:819px;top:678px" width="17" height="17"><path d="M6.0 4.0V13.0L10.5 8.5Z" fill="#999999"/></svg>
<div style="left:836px;top:678px;width:17px;height:17px;background:#9e9ed4;"></div>
<svg style="position:absolute;left:545px;top:100px" width="159" height="15" shape-rendering="crispEdges"><defs><pattern id="bw" width="4" height="4" patternUnits="userSpaceOnUse"><rect x="0" y="0" width="1" height="1" fill="#ffffff"/><rect x="2" y="2" width="1" height="1" fill="#ffffff"/><rect x="1" y="1" width="1" height="1" fill="#6666aa"/><rect x="3" y="3" width="1" height="1" fill="#6666aa"/></pattern></defs><rect width="159" height="15" fill="url(#bw)"/></svg>
<svg style="position:absolute;left:364px;top:100px" width="14" height="16" shape-rendering="crispEdges"><rect x="0.5" y="0.5" width="13" height="15" fill="#fff" stroke="#000"/><g fill="none" stroke="#6666aa"><rect x="3.5" y="3.5" width="2" height="2"/><rect x="3.5" y="7.5" width="2" height="2"/><rect x="3.5" y="11.5" width="2" height="2"/><rect x="8.5" y="7.5" width="2" height="2"/><rect x="8.5" y="11.5" width="2" height="2"/><path d="M6 4.5H7.5V8.5H8M6 12.5H7.5V10.5"/></g><rect x="8" y="3" width="1" height="2" fill="#6666aa"/><rect x="10" y="3" width="1" height="2" fill="#6666aa"/></svg>
<svg style="position:absolute;left:709px;top:98px" width="16" height="16" shape-rendering="crispEdges"><rect x="1" y="8" width="7" height="7" fill="#000"/><rect x="2" y="9" width="5" height="5" fill="#6666aa"/><rect x="3" y="10" width="3" height="3" fill="#fff"/><rect x="4" y="11" width="1" height="1" fill="#ccccff"/><rect x="9" y="2" width="2" height="6" fill="#000"/><rect x="9" y="6" width="6" height="2" fill="#000"/><rect x="11" y="3" width="1" height="3" fill="#6666aa"/><rect x="11" y="5" width="3" height="1" fill="#6666aa"/><path d="M15 1L11 5" stroke="#000" stroke-width="1.2" shape-rendering="auto"/><rect x="8" y="15" width="8" height="1" fill="#fff"/></svg>
<svg style="position:absolute;left:727px;top:98px" width="17" height="16" shape-rendering="crispEdges"><rect x="1" y="5" width="11" height="10" fill="#000"/><rect x="2" y="6" width="9" height="8" fill="#6666aa"/><rect x="3" y="7" width="7" height="6" fill="#ccccff"/><path d="M3 13L14 2" stroke="#000" stroke-width="1.3" shape-rendering="auto"/><rect x="9" y="1" width="7" height="2" fill="#000"/><rect x="14" y="1" width="2" height="7" fill="#000"/><rect x="10" y="3" width="4" height="1" fill="#6666aa"/><rect x="13" y="3" width="1" height="4" fill="#6666aa"/><rect x="1" y="15" width="12" height="1" fill="#fff"/><rect x="12" y="5" width="1" height="10" fill="#fff"/></svg>
<svg style="position:absolute;left:754px;top:99px" width="15" height="15" shape-rendering="crispEdges"><rect x="0" y="0" width="14" height="14" fill="#000"/><rect x="2" y="2" width="11" height="11" fill="#ccccff"/><rect x="2" y="12" width="11" height="1" fill="#6666aa"/><rect x="12" y="2" width="1" height="11" fill="#6666aa"/><rect x="14" y="0" width="1" height="15" fill="#fff"/><rect x="0" y="14" width="15" height="1" fill="#fff"/><path d="M3.5 3.5L10.5 10.5M10.5 3.5L3.5 10.5" stroke="#6666aa" stroke-width="2.2" shape-rendering="auto"/><path d="M3 3L11 11M11 3L3 11" stroke="#000" stroke-width="0.9" stroke-dasharray="1 1.2" shape-rendering="auto"/></svg>
<svg style="position:absolute;left:396px;top:402px" width="137" height="15" shape-rendering="crispEdges"><defs><pattern id="bv292" width="4" height="4" patternUnits="userSpaceOnUse"><rect x="0" y="0" width="1" height="1" fill="#ffffff"/><rect x="2" y="2" width="1" height="1" fill="#ffffff"/><rect x="1" y="1" width="1" height="1" fill="#777777"/><rect x="3" y="3" width="1" height="1" fill="#777777"/></pattern></defs><rect width="137" height="15" fill="url(#bv292)"/></svg>
<svg style="position:absolute;left:292px;top:402px" width="16" height="16" shape-rendering="crispEdges"><rect x="0.5" y="0.5" width="15" height="15" fill="#fff" stroke="#6666aa"/><circle cx="6" cy="10" r="4" fill="#cccccc" shape-rendering="auto"/><rect x="8" y="5" width="6" height="6" fill="#ccccff"/><path d="M2 7L7 2L10 5L8 7Z" fill="#6666aa" shape-rendering="auto"/></svg>
<svg style="position:absolute;left:541px;top:401px" width="15" height="15" shape-rendering="crispEdges"><rect x="0" y="0" width="14" height="14" fill="#000"/><rect x="2" y="2" width="11" height="11" fill="#dddddd"/><rect x="2" y="12" width="11" height="1" fill="#777777"/><rect x="12" y="2" width="1" height="11" fill="#777777"/><rect x="14" y="0" width="1" height="15" fill="#fff"/><rect x="0" y="14" width="15" height="1" fill="#fff"/><path d="M3.5 3.5L10.5 10.5M10.5 3.5L3.5 10.5" stroke="#777777" stroke-width="2.2" shape-rendering="auto"/><path d="M3 3L11 11M11 3L3 11" stroke="#000" stroke-width="0.9" stroke-dasharray="1 1.2" shape-rendering="auto"/></svg>
<svg style="position:absolute;left:688px;top:402px" width="138" height="15" shape-rendering="crispEdges"><defs><pattern id="bv584" width="4" height="4" patternUnits="userSpaceOnUse"><rect x="0" y="0" width="1" height="1" fill="#ffffff"/><rect x="2" y="2" width="1" height="1" fill="#ffffff"/><rect x="1" y="1" width="1" height="1" fill="#777777"/><rect x="3" y="3" width="1" height="1" fill="#777777"/></pattern></defs><rect width="138" height="15" fill="url(#bv584)"/></svg>
<svg style="position:absolute;left:584px;top:402px" width="16" height="16" shape-rendering="crispEdges"><rect x="0.5" y="0.5" width="15" height="15" fill="#fff" stroke="#6666aa"/><circle cx="6" cy="10" r="4" fill="#cccccc" shape-rendering="auto"/><rect x="8" y="5" width="6" height="6" fill="#ccccff"/><path d="M2 7L7 2L10 5L8 7Z" fill="#6666aa" shape-rendering="auto"/></svg>
<svg style="position:absolute;left:833px;top:401px" width="15" height="15" shape-rendering="crispEdges"><rect x="0" y="0" width="14" height="14" fill="#000"/><rect x="2" y="2" width="11" height="11" fill="#dddddd"/><rect x="2" y="12" width="11" height="1" fill="#777777"/><rect x="12" y="2" width="1" height="11" fill="#777777"/><rect x="14" y="0" width="1" height="15" fill="#fff"/><rect x="0" y="14" width="15" height="1" fill="#fff"/><path d="M3.5 3.5L10.5 10.5M10.5 3.5L3.5 10.5" stroke="#777777" stroke-width="2.2" shape-rendering="auto"/><path d="M3 3L11 11M11 3L3 11" stroke="#000" stroke-width="0.9" stroke-dasharray="1 1.2" shape-rendering="auto"/></svg>
<div style="left:6px;top:716px;width:513px;height:1px;background:#666666;"></div>
<div style="left:7px;top:717px;width:511px;height:1px;background:#aaaaaa;"></div>
<div style="left:6px;top:716px;width:1px;height:19px;background:#666666;"></div>
<div style="left:7px;top:717px;width:1px;height:17px;background:#aaaaaa;"></div>
<div style="left:6px;top:734px;width:514px;height:1px;background:#ffffff;"></div>
<div style="left:6px;top:735px;width:514px;height:1px;background:#ffffff;"></div>
<div style="left:518px;top:716px;width:1px;height:20px;background:#ffffff;"></div>
<div style="left:519px;top:716px;width:1px;height:20px;background:#ffffff;"></div>
<div style="left:520px;top:716px;width:152px;height:1px;background:#666666;"></div>
<div style="left:521px;top:717px;width:150px;height:1px;background:#aaaaaa;"></div>
<div style="left:520px;top:716px;width:1px;height:19px;background:#666666;"></div>
<div style="left:521px;top:717px;width:1px;height:17px;background:#aaaaaa;"></div>
<div style="left:520px;top:734px;width:153px;height:1px;background:#ffffff;"></div>
<div style="left:520px;top:735px;width:153px;height:1px;background:#ffffff;"></div>
<div style="left:671px;top:716px;width:1px;height:20px;background:#ffffff;"></div>
<div style="left:672px;top:716px;width:1px;height:20px;background:#ffffff;"></div>
<div style="left:673px;top:716px;width:150px;height:1px;background:#666666;"></div>
<div style="left:674px;top:717px;width:148px;height:1px;background:#aaaaaa;"></div>
<div style="left:673px;top:716px;width:1px;height:19px;background:#666666;"></div>
<div style="left:674px;top:717px;width:1px;height:17px;background:#aaaaaa;"></div>
<div style="left:673px;top:734px;width:151px;height:1px;background:#ffffff;"></div>
<div style="left:673px;top:735px;width:151px;height:1px;background:#ffffff;"></div>
<div style="left:822px;top:716px;width:1px;height:20px;background:#ffffff;"></div>
<div style="left:823px;top:716px;width:1px;height:20px;background:#ffffff;"></div>
<div style="left:824px;top:716px;width:74px;height:1px;background:#666666;"></div>
<div style="left:825px;top:717px;width:72px;height:1px;background:#aaaaaa;"></div>
<div style="left:824px;top:716px;width:1px;height:19px;background:#666666;"></div>
<div style="left:825px;top:717px;width:1px;height:17px;background:#aaaaaa;"></div>
<div style="left:824px;top:734px;width:75px;height:1px;background:#ffffff;"></div>
<div style="left:824px;top:735px;width:75px;height:1px;background:#ffffff;"></div>
<div style="left:897px;top:716px;width:1px;height:20px;background:#ffffff;"></div>
<div style="left:898px;top:716px;width:1px;height:20px;background:#ffffff;"></div>
<div class="" style="left:678px;top:718.84px;font-size:12px;line-height:12px;font-weight:normal;color:#000;white-space:pre;letter-spacing:0.3px">(28,35)</div>
<svg style="position:absolute;left:0;top:0" width="905" height="742"><path d="M460 235.5 L502 235.5" fill="none" stroke="#22ee22" stroke-width="1.0"/><path d="M530 235.5 L534.5 235.5 L534.5 165.5 L562 165.5" fill="none" stroke="#000" stroke-width="1.0"/><path d="M600 165.5 L632 165.5" fill="none" stroke="#000" stroke-width="1.0"/><path d="M530 245.5 L562 245.5" fill="none" stroke="#000" stroke-width="1.0"/><path d="M530 255.5 L534.5 255.5 L534.5 303" fill="none" stroke="#000" stroke-width="1.0"/><path d="M620 245.5 L632 245.5" fill="none" stroke="#000" stroke-width="1.0"/><path d="M620 255.5 L622 255.5" fill="none" stroke="#000" stroke-width="1.0"/><path d="M567 165.5 L570 165.5" fill="none" stroke="#000" stroke-width="2"/><path d="M637 165.5 L640 165.5" fill="none" stroke="#000" stroke-width="2"/><path d="M507 235.5 L510 235.5" fill="none" stroke="#000" stroke-width="2"/><path d="M567 245.5 L570 245.5" fill="none" stroke="#000" stroke-width="2"/><path d="M637 245.5 L640 245.5" fill="none" stroke="#000" stroke-width="2"/><path d="M567 255.5 L570 255.5" fill="none" stroke="#000" stroke-width="2"/><path d="M567 265.5 L570 265.5" fill="none" stroke="#000" stroke-width="2"/><path d="M567 275.5 L570 275.5" fill="none" stroke="#000" stroke-width="2"/><path d="M537 305.5 L540 305.5" fill="none" stroke="#000" stroke-width="2"/><rect x="429.75" y="230.75" width="29.5" height="19.5" rx="3" ry="3" fill="#c4c4c4" stroke="#22dd22" stroke-width="1.3"/><rect x="452.5" y="233.5" width="4" height="4" fill="#00ee00" stroke="#000" stroke-width="1"/><rect x="509.75" y="230.75" width="19.5" height="29.5" rx="3" ry="3" fill="#c4c4c4" stroke="#111" stroke-width="1.3"/><rect x="512.5" y="233.5" width="4" height="4" fill="#00ee00" stroke="#000" stroke-width="1"/><rect x="522.5" y="233.5" width="4" height="4" fill="#00ee00" stroke="#000" stroke-width="1"/><rect x="522.5" y="243.5" width="4" height="4" fill="#00ee00" stroke="#000" stroke-width="1"/><rect x="522.5" y="253.5" width="4" height="4" fill="#00ee00" stroke="#000" stroke-width="1"/><rect x="569.75" y="160.75" width="29.5" height="19.5" rx="3" ry="3" fill="#c4c4c4" stroke="#111" stroke-width="1.3"/><rect x="572.5" y="163.5" width="4" height="4" fill="#00ee00" stroke="#000" stroke-width="1"/><rect x="592.5" y="163.5" width="4" height="4" fill="#00ee00" stroke="#000" stroke-width="1"/><rect x="639.75" y="160.75" width="19.5" height="19.5" rx="3" ry="3" fill="#c4c4c4" stroke="#111" stroke-width="1.3"/><rect x="642.5" y="163.5" width="4" height="4" fill="#00ee00" stroke="#000" stroke-width="1"/><rect x="569.75" y="240.75" width="49.5" height="39.5" rx="3" ry="3" fill="#c4c4c4" stroke="#111" stroke-width="1.3"/><rect x="572.5" y="243.5" width="4" height="4" fill="#00ee00" stroke="#000" stroke-width="1"/><rect x="572.5" y="253.5" width="4" height="4" fill="#f0c800" stroke="#000" stroke-width="1"/><rect x="572.5" y="263.5" width="4" height="4" fill="#f0c800" stroke="#000" stroke-width="1"/><rect x="572.5" y="273.5" width="4" height="4" fill="#f0c800" stroke="#000" stroke-width="1"/><rect x="612.5" y="243.5" width="4" height="4" fill="#00ee00" stroke="#000" stroke-width="1"/><rect x="612.5" y="253.5" width="4" height="4" fill="#dd0000" stroke="#000" stroke-width="1"/><rect x="639.75" y="240.75" width="19.5" height="19.5" rx="3" ry="3" fill="#c4c4c4" stroke="#111" stroke-width="1.3"/><rect x="642.5" y="243.5" width="4" height="4" fill="#00ee00" stroke="#000" stroke-width="1"/><rect x="539.75" y="300.75" width="19.5" height="19.5" rx="3" ry="3" fill="#c4c4c4" stroke="#111" stroke-width="1.3"/><rect x="542.5" y="303.5" width="4" height="4" fill="#00ee00" stroke="#000" stroke-width="1"/><circle cx="504.5" cy="235.5" r="3.6" fill="#ff0000"/><circle cx="564.5" cy="165.5" r="3.6" fill="#ff0000"/><circle cx="634.5" cy="165.5" r="3.6" fill="#ff0000"/><circle cx="564.5" cy="245.5" r="3.6" fill="#ff0000"/><circle cx="634.5" cy="245.5" r="3.6" fill="#ff0000"/><circle cx="624" cy="255.5" r="3.6" fill="#ff0000"/><circle cx="534.5" cy="305.5" r="3.6" fill="#ff0000"/><circle cx="564.5" cy="255.5" r="3.1" fill="none" stroke="#0000ff" stroke-width="1.2"/><circle cx="564.5" cy="265.5" r="3.1" fill="none" stroke="#00dd00" stroke-width="1.2"/><circle cx="564.5" cy="275.5" r="3.1" fill="none" stroke="#00dd00" stroke-width="1.2"/><text x="444.5" y="261" font-size="9.2" letter-spacing="0.55" text-anchor="middle" fill="#000" font-family="Liberation Sans">TinaImageReader</text><text x="519" y="271" font-size="9.2" letter-spacing="0.55" text-anchor="middle" fill="#000" font-family="Liberation Sans">X3</text><text x="584.5" y="191" font-size="9.2" letter-spacing="0.55" text-anchor="middle" fill="#000" font-family="Liberation Sans">AortaTracker</text><text x="649" y="191" font-size="9.2" letter-spacing="0.55" text-anchor="middle" fill="#000" font-family="Liberation Sans">IMAGE</text><text x="594.5" y="291" font-size="9.2" letter-spacing="0.55" text-anchor="middle" fill="#000" font-family="Liberation Sans">CANNY</text><text x="649" y="271" font-size="9.2" letter-spacing="0.55" text-anchor="middle" fill="#000" font-family="Liberation Sans">IMAGE</text><text x="549" y="331" font-size="9.2" letter-spacing="0.55" text-anchor="middle" fill="#000" font-family="Liberation Sans">IMAGE</text></svg>
<svg style="position:absolute;left:287px;top:492px" width="256" height="116"><defs><filter id="bl" x="-20%" y="-20%" width="140%" height="140%"><feGaussianBlur stdDeviation="1.5"/></filter><filter id="bl2" x="-30%" y="-30%" width="160%" height="160%"><feGaussianBlur stdDeviation="3"/></filter><filter id="nz"><feTurbulence type="fractalNoise" baseFrequency="0.6" numOctaves="1" seed="3"/><feColorMatrix type="matrix" values="0 0 0 0 1  0 0 0 0 1  0 0 0 0 1  0 0 0 0.3 -0.125"/></filter><clipPath id="cb"><rect x="0" y="0" width="256" height="116"/></clipPath></defs><g clip-path="url(#cb)"><rect width="256" height="116" fill="#040404"/><g filter="url(#bl2)"><path d="M-10 -10H30Q12 8 0 32L-10 32Z" fill="#383838"/><path d="M205 -10H270V126H262Q258 70 246 40Q232 12 205 -10Z" fill="#303030"/><path d="M-10 98L10 126H-10Z" fill="#505050"/><path d="M266 80L238 126H266Z" fill="#505050"/><path d="M135 -10H205Q190 10 170 14Q150 12 135 -10Z" fill="#2c2c2c"/></g><g filter="url(#bl)"><path d="M92 58 Q95 50 105 47 Q112 42 108 28 Q112 14 128 8 Q150 4 158 18 Q163 35 160 52 Q155 62 140 64 Q120 68 105 66 Q94 64 92 58Z" fill="#a8a8a8"/><ellipse cx="143" cy="36" rx="15" ry="23" fill="#c2c2c2"/><ellipse cx="117.8" cy="26.9" rx="14" ry="14" fill="#a4a4a4"/><ellipse cx="98.6" cy="42.8" rx="12" ry="10.5" fill="#d4d4d4"/><ellipse cx="167.8" cy="59.5" rx="6" ry="6" fill="#b0b0b0"/><ellipse cx="163" cy="71" rx="6" ry="5" fill="#8a8a8a"/><ellipse cx="174.5" cy="88" rx="10" ry="8" fill="#9a9a9a"/><path d="M100 116 L106 92 Q118 84 130 92 L136 116Z" fill="#383838"/><ellipse cx="141" cy="94.6" rx="11.5" ry="11" fill="#d8d8d8"/><ellipse cx="118.6" cy="79.5" rx="5" ry="5" fill="#a0a0a0"/><ellipse cx="70" cy="53" rx="6" ry="4" fill="#404040"/><ellipse cx="66" cy="66" rx="3" ry="4" fill="#505050"/><ellipse cx="44" cy="79" rx="4" ry="4" fill="#353535"/><ellipse cx="79" cy="92" rx="3" ry="3" fill="#606060"/><ellipse cx="82" cy="60" rx="4" ry="4" fill="#606060"/><ellipse cx="186" cy="30" rx="3" ry="10" fill="#2e2e2e"/></g><rect width="256" height="116" filter="url(#nz)"/><circle cx="117.8" cy="26.9" r="14.5" fill="none" stroke="#ff1010" stroke-width="1.8"/><path d="M130.3 26.9h4M132.3 24.9v4" stroke="#ff0000" stroke-width="1"/><path d="M129.7 31.0h4M131.7 29.0v4" stroke="#ff0000" stroke-width="1"/><path d="M128.0 34.7h4M130.0 32.7v4" stroke="#ff0000" stroke-width="1"/><path d="M125.3 37.9h4M127.3 35.9v4" stroke="#ff0000" stroke-width="1"/><path d="M121.8 40.1h4M123.8 38.1v4" stroke="#ff0000" stroke-width="1"/><path d="M117.9 41.3h4M119.9 39.3v4" stroke="#ff0000" stroke-width="1"/><path d="M113.7 41.3h4M115.7 39.3v4" stroke="#ff0000" stroke-width="1"/><path d="M109.8 40.1h4M111.8 38.1v4" stroke="#ff0000" stroke-width="1"/><path d="M106.3 37.9h4M108.3 35.9v4" stroke="#ff0000" stroke-width="1"/><path d="M103.6 34.7h4M105.6 32.7v4" stroke="#ff0000" stroke-width="1"/><path d="M101.9 31.0h4M103.9 29.0v4" stroke="#ff0000" stroke-width="1"/><path d="M101.3 26.9h4M103.3 24.9v4" stroke="#ff0000" stroke-width="1"/><path d="M101.9 22.8h4M103.9 20.8v4" stroke="#ff0000" stroke-width="1"/><path d="M103.6 19.1h4M105.6 17.1v4" stroke="#ff0000" stroke-width="1"/><path d="M106.3 15.9h4M108.3 13.9v4" stroke="#ff0000" stroke-width="1"/><path d="M109.8 13.7h4M111.8 11.7v4" stroke="#ff0000" stroke-width="1"/><path d="M113.7 12.5h4M115.7 10.5v4" stroke="#ff0000" stroke-width="1"/><path d="M117.9 12.5h4M119.9 10.5v4" stroke="#ff0000" stroke-width="1"/><path d="M121.8 13.7h4M123.8 11.7v4" stroke="#ff0000" stroke-width="1"/><path d="M125.3 15.9h4M127.3 13.9v4" stroke="#ff0000" stroke-width="1"/><path d="M128.0 19.1h4M130.0 17.1v4" stroke="#ff0000" stroke-width="1"/><path d="M129.7 22.8h4M131.7 20.8v4" stroke="#ff0000" stroke-width="1"/><rect x="120.9" y="39.8" width="2" height="2" fill="#22dd22"/><rect x="116.8" y="40.4" width="2" height="2" fill="#22dd22"/><rect x="112.7" y="12.0" width="2" height="2" fill="#22dd22"/><rect x="116.8" y="11.4" width="2" height="2" fill="#22dd22"/><rect x="120.9" y="12.0" width="2" height="2" fill="#22dd22"/></g></svg>
<svg style="position:absolute;left:583px;top:491px" width="249" height="118"><defs><clipPath id="ce"><rect x="0" y="0" width="249" height="118"/></clipPath><filter id="ed" x="0" y="0" width="100%" height="100%" color-interpolation-filters="sRGB"><feTurbulence type="fractalNoise" baseFrequency="0.19" numOctaves="1" seed="11" result="t"/><feColorMatrix in="t" type="matrix" values="1 0 0 0 0  1 0 0 0 0  1 0 0 0 0  0 0 0 0 1" result="g"/><feComponentTransfer in="g" result="d"><feFuncR type="discrete" tableValues="0 1"/><feFuncG type="discrete" tableValues="0 1"/><feFuncB type="discrete" tableValues="0 1"/></feComponentTransfer><feConvolveMatrix in="d" order="3" kernelMatrix="0 -1 0 -1 4 -1 0 -1 0" preserveAlpha="true" result="e"/><feColorMatrix in="e" type="matrix" values="0.33 0 0 0 0  0 0.33 0 0 0  0 0 0.33 0 0  0 0 0 0 1"/></filter></defs><g clip-path="url(#ce)"><rect width="249" height="118" fill="#000"/><rect width="249" height="118" filter="url(#ed)"/><path d="M0 0.5H249M0 117.5H249" fill="none" stroke="#fff" stroke-width="1.1"/><ellipse cx="114.7" cy="28.5" rx="14.4" ry="15.1" fill="none" stroke="#fff" stroke-width="1.1" transform="rotate(-25 114.7 28.5)"/><ellipse cx="114.7" cy="28.5" rx="11" ry="12" fill="none" stroke="#fff" stroke-width="1.1" stroke-opacity="0.6" transform="rotate(-25 114.7 28.5)"/><ellipse cx="94.6" cy="42.9" rx="11.5" ry="10.8" fill="none" stroke="#fff" stroke-width="1.1"/><ellipse cx="94.6" cy="42.9" rx="8" ry="7.5" fill="none" stroke="#fff" stroke-width="1.1" stroke-opacity="0.5"/><circle cx="137" cy="95.3" r="12" fill="none" stroke="#fff" stroke-width="1.1"/><circle cx="134" cy="92" r="7" fill="none" stroke="#fff" stroke-width="1.1" stroke-opacity="0.5"/><circle cx="114.7" cy="80.8" r="5.7" fill="none" stroke="#fff" stroke-width="1.1"/><circle cx="163.5" cy="60.8" r="5.8" fill="none" stroke="#fff" stroke-width="1.1"/><path d="M77.3 58 L88.8 66.6 L100.3 64.3 L114.7 66 L129 62.3 L143.4 65.1 L150.6 72.3 L160.7 75.2 L169.3 81 L177.9 86.7 L179.3 92.4 L172.2 96.8 L163.6 92.4" fill="none" stroke="#fff" stroke-width="1.1" stroke-linejoin="round"/><path d="M109 14.9 L103.2 6.2 L117.6 1.9 L131.9 6.2 L146.3 14.9 L154.9 26.4 L159.2 40.7 L166.4 55.1 L169.3 66.6" fill="none" stroke="#fff" stroke-width="1.1" stroke-linejoin="round"/><path d="M129 43.6 L140.6 37.9 L149.2 29.2 L143.4 17.7 L134.8 12" fill="none" stroke="#fff" stroke-width="1.1"/><path d="M166.4 6.2 L170.7 12 L180.8 9.1 L177.9 3.4 L168 3" fill="none" stroke="#fff" stroke-width="1.1"/><path d="M177.9 26.4 L183.7 39.3" fill="none" stroke="#fff" stroke-width="1.1"/><path d="M223.9 12 L238.3 29.2 L245.4 52.2 L246.9 81 L241.1 104 L232.5 115.4" fill="none" stroke="#fff" stroke-width="1.1" stroke-linejoin="round"/><path d="M0 105.4 L5.5 115.4" fill="none" stroke="#fff" stroke-width="1.1"/><circle cx="40.6" cy="79.5" r="4.5" fill="none" stroke="#fff" stroke-width="1.1"/><circle cx="75.9" cy="93.9" r="3.5" fill="none" stroke="#fff" stroke-width="1.1"/><path d="M51.5 49.3 L71.6 50.8 L73 58 L63 59.4 L64.4 70.9 L58.7 70.9 L57.2 59.4 L52.9 56.5Z" fill="none" stroke="#fff" stroke-width="1.1"/><path d="M94.6 89.6 L90.3 104 L88.8 115.4" fill="none" stroke="#fff" stroke-width="1.1"/><path d="M132 115.4 L129 109.7 L134.8 106.8" fill="none" stroke="#fff" stroke-width="1.1"/><path d="M150 96 L165 98 L178 100 L185 95" fill="none" stroke="#fff" stroke-width="1.1" stroke-opacity="0.8"/><path d="M0 30 L8 18 L22 8" fill="none" stroke="#fff" stroke-width="1.1" stroke-opacity="0.7"/></g></svg>
<svg style="position:absolute;left:28px;top:61px" width="19" height="16"><path d="M1.5 4.5H5.5L6.5 5.5H13.5V8.5H4L1.5 13Z" fill="#ccccff" stroke="#000" stroke-width="1"/><path d="M4 8.5H17.5L13.5 13.5H0.5Z" fill="#6666aa" stroke="#000" stroke-width="1"/><path d="M9.5 3.5Q12 0.5 15.5 3" fill="none" stroke="#000" stroke-width="1.1"/><path d="M13.5 3.5H17L15.5 6Z" fill="#000"/></svg>
<svg style="position:absolute;left:56px;top:62px" width="15" height="15" shape-rendering="crispEdges"><rect x="0" y="0" width="14" height="14" fill="#000"/><rect x="1" y="1" width="12" height="12" fill="#6666aa"/><rect x="3" y="1" width="8" height="6" fill="#ccccff"/><rect x="3" y="8" width="8" height="5" fill="#000"/><rect x="8" y="9" width="2" height="3" fill="#ccccff"/><rect x="12" y="1" width="1" height="1" fill="#fff"/></svg>
<svg style="position:absolute;left:82px;top:61px" width="17" height="16" shape-rendering="crispEdges"><rect x="5" y="0" width="11" height="11" fill="#000"/><rect x="6" y="1" width="9" height="9" fill="#6666aa"/><rect x="7" y="1" width="6" height="4" fill="#ccccff"/><rect x="7" y="6" width="6" height="4" fill="#000"/><rect x="10" y="7" width="2" height="2" fill="#ccccff"/><rect x="6" y="2" width="8" height="1" fill="#ccccff"/><rect x="3" y="2" width="11" height="11" fill="#000"/><rect x="4" y="3" width="9" height="9" fill="#6666aa"/><rect x="5" y="3" width="6" height="4" fill="#ccccff"/><rect x="5" y="8" width="6" height="4" fill="#000"/><rect x="8" y="9" width="2" height="2" fill="#ccccff"/><rect x="4" y="4" width="8" height="1" fill="#ccccff"/><rect x="1" y="4" width="11" height="11" fill="#000"/><rect x="2" y="5" width="9" height="9" fill="#6666aa"/><rect x="3" y="5" width="6" height="4" fill="#ccccff"/><rect x="3" y="10" width="6" height="4" fill="#000"/><rect x="6" y="11" width="2" height="2" fill="#ccccff"/></svg>
<svg style="position:absolute;left:113px;top:60px" width="18" height="18" shape-rendering="crispEdges"><rect x="0" y="0" width="18" height="18" fill="#000"/><rect x="1.5" y="1.5" width="15" height="15" fill="#fff"/><rect x="5" y="1.5" width="11.5" height="11" fill="#9c9cd8"/><path d="M14.5 3.5L8 10M7.5 5V11H13" fill="none" stroke="#808080" stroke-width="2.3" shape-rendering="auto"/></svg>
<svg style="position:absolute;left:140px;top:60px" width="18" height="18" shape-rendering="crispEdges"><rect x="0" y="0" width="18" height="18" fill="#000"/><rect x="1.5" y="1.5" width="15" height="15" fill="#fff"/><rect x="5" y="1.5" width="11.5" height="11" fill="#9c9cd8"/><path d="M7.5 10.5L14 4M9.5 3.5H15V9" fill="none" stroke="#808080" stroke-width="2.3" shape-rendering="auto"/></svg>
<svg style="position:absolute;left:180px;top:68px" width="12" height="10"><path d="M0 0L5.5 4.5L0 9Z M6 0L11.5 4.5L6 9Z" fill="#000080" shape-rendering="auto"/></svg>
<svg style="position:absolute;left:213px;top:68px" width="6" height="10"><path d="M0 0L5.5 4.5L0 9Z" fill="#000080" shape-rendering="auto"/></svg>
<svg style="position:absolute;left:241px;top:68px" width="6" height="9" shape-rendering="crispEdges"><rect x="0" y="0" width="2" height="9" fill="#888"/><rect x="4" y="0" width="2" height="9" fill="#888"/></svg>
<svg style="position:absolute;left:268px;top:69px" width="8" height="8" shape-rendering="crispEdges"><rect x="0" y="0" width="8" height="8" fill="#888"/></svg>
<svg style="position:absolute;left:10px;top:117px" width="26" height="26" shape-rendering="crispEdges"><rect x="4.5" y="4.5" width="2" height="2" fill="#fff" stroke="#000"/><rect x="7.5" y="8.5" width="2" height="2" fill="#fff" stroke="#000"/><rect x="10.5" y="12.5" width="2" height="2" fill="#fff" stroke="#000"/><rect x="13.5" y="16.5" width="2" height="2" fill="#fff" stroke="#000"/><path d="M5.5 7V9.5H7M8.5 11V13.5H10M11.5 15V17.5H13" stroke="#000" fill="none"/><rect x="11" y="9" width="6" height="1" fill="#000"/><rect x="14" y="13" width="6" height="1" fill="#000"/><rect x="17" y="17" width="6" height="1" fill="#000"/><rect x="5" y="11" width="1" height="1" fill="#000"/><rect x="5" y="14" width="1" height="1" fill="#000"/><rect x="8" y="14" width="1" height="1" fill="#000"/><rect x="5" y="17" width="1" height="1" fill="#000"/><rect x="8" y="17" width="1" height="1" fill="#000"/><rect x="11" y="17" width="1" height="1" fill="#000"/><rect x="5" y="21" width="1" height="1" fill="#000"/><rect x="8" y="21" width="1" height="1" fill="#000"/><rect x="11" y="21" width="1" height="1" fill="#000"/><rect x="14" y="21" width="1" height="1" fill="#000"/></svg>
<svg style="position:absolute;left:37px;top:117px" width="26" height="26" shape-rendering="crispEdges"><rect x="4.5" y="4.5" width="2" height="2" fill="#fff" stroke="#000"/><rect x="5" y="7" width="1" height="15" fill="#000"/><rect x="7.5" y="8.5" width="2" height="2" fill="#fff" stroke="#000"/><rect x="6" y="9" width="1" height="1" fill="#000"/><rect x="11" y="9" width="7" height="1" fill="#000"/><rect x="7.5" y="12.5" width="2" height="2" fill="#fff" stroke="#000"/><rect x="6" y="13" width="1" height="1" fill="#000"/><rect x="11" y="13" width="7" height="1" fill="#000"/><rect x="7.5" y="16.5" width="2" height="2" fill="#fff" stroke="#000"/><rect x="6" y="17" width="1" height="1" fill="#000"/><rect x="11" y="17" width="7" height="1" fill="#000"/><rect x="7.5" y="20.5" width="2" height="2" fill="#fff" stroke="#000"/><rect x="6" y="21" width="1" height="1" fill="#000"/><rect x="11" y="21" width="7" height="1" fill="#000"/></svg>
<svg style="position:absolute;left:72px;top:120px" width="20" height="20" shape-rendering="crispEdges"><path d="M1.5 2.5H7.5V4.5H17.5V18.5H1.5Z" fill="none" stroke="#7a7a7a"/><path d="M1.5 4.5H7.5" stroke="#7a7a7a"/><rect x="3.5" y="7.5" width="2" height="2" fill="none" stroke="#7a7a7a"/><rect x="7.5" y="7.5" width="2" height="2" fill="none" stroke="#7a7a7a"/><rect x="7.5" y="11.5" width="2" height="2" fill="none" stroke="#7a7a7a"/><rect x="7.5" y="14.5" width="2" height="2" fill="none" stroke="#7a7a7a"/><path d="M3 12.5H6M4.5 11V14M3 15.5H6M4.5 14V17M11 8.5H16M11 12.5H16M11 15.5H16" stroke="#7a7a7a"/></svg>
<svg style="position:absolute;left:101px;top:124px" width="16" height="13" shape-rendering="crispEdges"><path d="M0.5 2.5H9.5V1.5H14.5V11.5H0.5Z" fill="none" stroke="#7a7a7a"/><path d="M9.5 2.5H14.5" stroke="#7a7a7a"/></svg>
<svg style="position:absolute;left:131px;top:123px" width="12" height="15" shape-rendering="crispEdges"><path d="M0.5 0.5H7.5L10.5 3.5V13.5H0.5Z" fill="none" stroke="#7a7a7a"/></svg>
<svg style="position:absolute;left:157px;top:123px" width="12" height="16" shape-rendering="crispEdges"><ellipse cx="5.5" cy="2.5" rx="5" ry="2" fill="none" stroke="#7a7a7a" shape-rendering="auto"/><path d="M0.5 2.5V13M10.5 2.5V13" stroke="#7a7a7a"/><ellipse cx="5.5" cy="13" rx="5" ry="2" fill="none" stroke="#7a7a7a" shape-rendering="auto"/><path d="M3.5 6V13M5.5 6V14M7.5 6V13" stroke="#7a7a7a"/></svg>
<svg style="position:absolute;left:186px;top:120px" width="19" height="20" shape-rendering="crispEdges"><path d="M0.5 0.5H7.5L10.5 3.5V12.5H0.5Z" fill="#fff" stroke="#000"/><rect x="7" y="1" width="2" height="2" fill="#6666aa"/><path d="M2 4.5H8M2 6.5H8M2 8.5H7" stroke="#9999dd"/><circle cx="11" cy="13" r="3.5" fill="#fff" stroke="#000" stroke-width="1.2" shape-rendering="auto"/><path d="M13.5 15.5L17 19" stroke="#000" stroke-width="1.6" shape-rendering="auto"/></svg>
<svg style="position:absolute;left:213px;top:120px" width="19" height="20" shape-rendering="crispEdges"><path d="M0.5 0.5H7.5L10.5 3.5V12.5H0.5Z" fill="#fff" stroke="#000"/><rect x="7" y="1" width="2" height="2" fill="#6666aa"/><text x="2" y="10" font-size="9" font-family="Liberation Sans" fill="#888">?</text><circle cx="11" cy="13" r="3.5" fill="#fff" stroke="#000" stroke-width="1.2" shape-rendering="auto"/><path d="M13.5 15.5L17 19" stroke="#000" stroke-width="1.6" shape-rendering="auto"/></svg>
</body></html>
